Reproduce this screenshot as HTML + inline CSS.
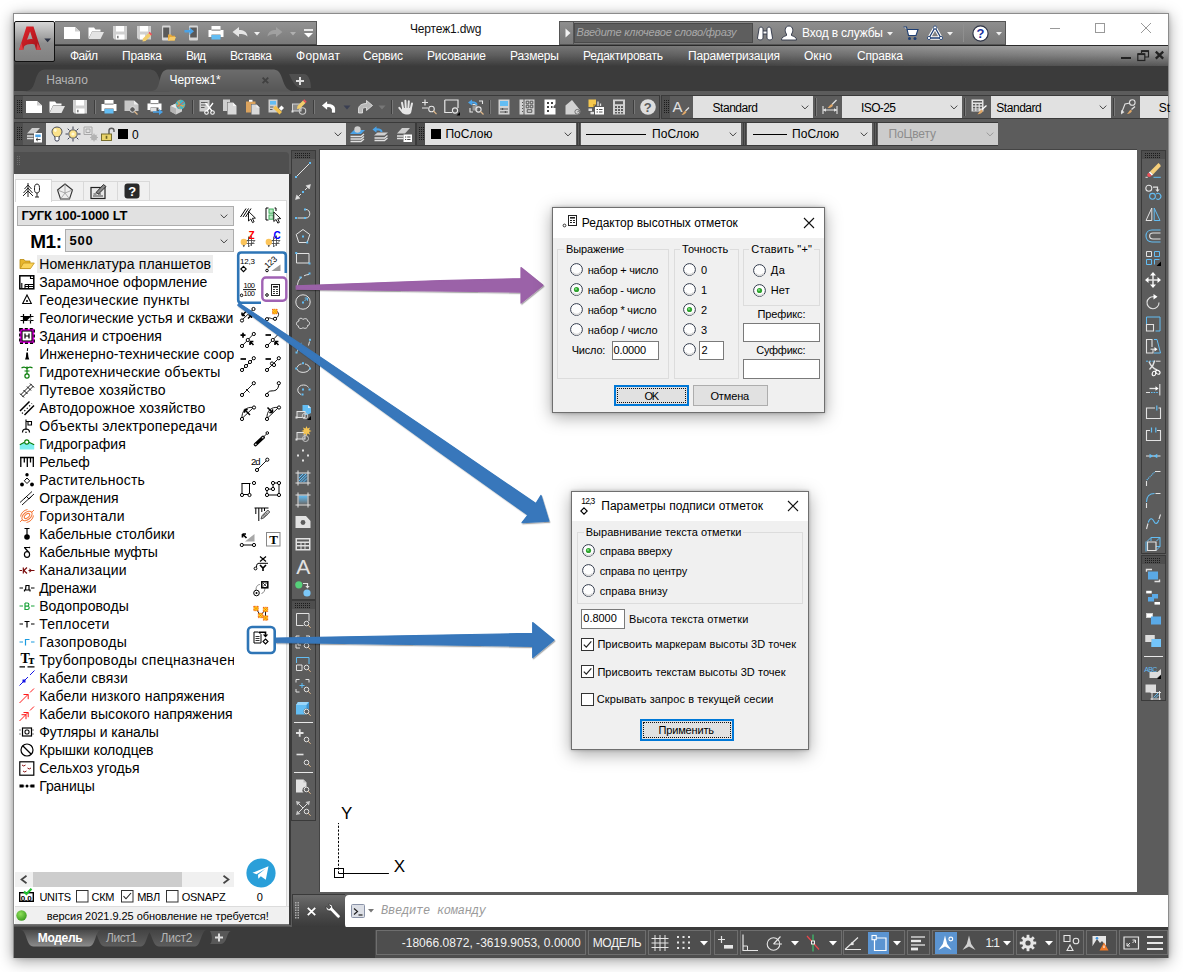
<!DOCTYPE html>
<html lang="ru"><head><meta charset="utf-8"><title>Чертеж1.dwg</title>
<style>
html,body{margin:0;padding:0;}
body{width:1183px;height:972px;overflow:hidden;background:#fff;position:relative;font-family:"Liberation Sans",sans-serif;}
div,svg{position:absolute;box-sizing:border-box;}
svg{overflow:visible;}
.t{white-space:nowrap;}
</style></head><body>
<div style="left:13px;top:13px;width:1156px;height:945px;background:#fff;border:1px solid #8c8c8c;box-shadow:0 3px 14px rgba(0,0,0,.38),0 0 4px rgba(0,0,0,.18);"></div>
<div style="left:14px;top:45px;width:1154px;height:50px;background:#3b3b3b;"></div>
<div style="left:14px;top:91px;width:1154px;height:836px;background:#5c5c5c;"></div>
<div style="left:55px;top:21px;width:262px;height:24px;background:linear-gradient(#929292,#7a7a7a);border-top:1px solid #5a5a5a;border-right:1px solid #555;border-bottom:1px solid #444;"></div>
<div class="t" style="left:410.00px;top:21px;font-size:12px;line-height:16px;color:#111;letter-spacing:-0.153px;">Чертеж1.dwg</div>
<div style="left:559px;top:21px;width:447px;height:24px;background:linear-gradient(#8e8e8e,#787878);border:1px solid #555;"></div>
<div style="left:574px;top:23px;width:179px;height:20px;background:#5e5e5e;border:1px solid #4a4a4a;"></div>
<div class="t" style="left:576.50px;top:25px;font-size:11px;line-height:14px;color:#a9a9a9;letter-spacing:-0.188px;font-style:italic;">Введите ключевое слово/фразу</div>
<div class="t" style="left:802.00px;top:25px;font-size:12px;line-height:16px;color:#fff;letter-spacing:-0.166px;">Вход в службы</div>
<div style="left:14px;top:45px;width:1154px;height:21px;background:linear-gradient(90deg,rgba(0,0,0,.33) 0%,rgba(0,0,0,.30) 55%,rgba(0,0,0,.12) 80%,rgba(0,0,0,0) 100%),linear-gradient(#aaaaaa,#888 45%,#565656);border-top:1px solid #2a2a2a;"></div>
<div class="t" style="left:70.00px;top:48px;font-size:12px;line-height:16px;color:#fff;letter-spacing:-0.501px;">Файл</div>
<div class="t" style="left:122.00px;top:48px;font-size:12px;line-height:16px;color:#fff;letter-spacing:-0.107px;">Правка</div>
<div class="t" style="left:186.00px;top:48px;font-size:12px;line-height:16px;color:#fff;letter-spacing:-0.855px;">Вид</div>
<div class="t" style="left:230.00px;top:48px;font-size:12px;line-height:16px;color:#fff;letter-spacing:-0.434px;">Вставка</div>
<div class="t" style="left:296.00px;top:48px;font-size:12px;line-height:16px;color:#fff;letter-spacing:0.275px;">Формат</div>
<div class="t" style="left:363.00px;top:48px;font-size:12px;line-height:16px;color:#fff;letter-spacing:-0.218px;">Сервис</div>
<div class="t" style="left:427.00px;top:48px;font-size:12px;line-height:16px;color:#fff;letter-spacing:-0.179px;">Рисование</div>
<div class="t" style="left:510.00px;top:48px;font-size:12px;line-height:16px;color:#fff;letter-spacing:-0.145px;">Размеры</div>
<div class="t" style="left:583.00px;top:48px;font-size:12px;line-height:16px;color:#fff;letter-spacing:-0.241px;">Редактировать</div>
<div class="t" style="left:688.00px;top:48px;font-size:12px;line-height:16px;color:#fff;letter-spacing:-0.176px;">Параметризация</div>
<div class="t" style="left:804.00px;top:48px;font-size:12px;line-height:16px;color:#fff;letter-spacing:0.039px;">Окно</div>
<div class="t" style="left:857.00px;top:48px;font-size:12px;line-height:16px;color:#fff;letter-spacing:-0.179px;">Справка</div>
<div style="left:14px;top:21px;width:41px;height:41px;background:linear-gradient(#d6d6d6,#8e8e8e 55%,#808080);border:1px solid #111;border-radius:2px;"></div>
<svg style="left:14px;top:66px;" width="320" height="29" viewBox="0 0 320 29">
<defs><linearGradient id="tabA" x1="0" y1="0" x2="0" y2="1"><stop offset="0" stop-color="#6c6c6c"/><stop offset="1" stop-color="#565656"/></linearGradient></defs>
<path d="M8 25.5 C18 25.5 19 22 22 12 C25 4.5 27 3.5 33 3.5 L134 3.5 C141 3.5 143 6 145 12 C148 22 150 25.5 158 25.5 Z" fill="#4c4c4c"/>
<path d="M134 25.5 C143 25.5 144 22 146 13 C148 5 150 3.5 156 3.5 L258 3.5 C264 3.5 266 6 268 12 C271 21 273 25.5 282 25.5 Z" fill="url(#tabA)"/>
<path d="M275 8 L290 8 C294 8 297 14 297 22 L288 22 C281 22 278 14 275 8 Z" fill="#4f4f4f"/>
<path d="M282 15 h8 M286 11 v8" stroke="#dcdcdc" stroke-width="2" fill="none"/>
<path d="M248.6 11.6 l5.6 5.6 M254.2 11.6 l-5.6 5.6" stroke="#414141" stroke-width="1.9" fill="none"/>
</svg>
<div class="t" style="left:46.30px;top:72px;font-size:12px;line-height:16px;color:#b4b4b4;letter-spacing:-0.062px;">Начало</div>
<div class="t" style="left:169.60px;top:72px;font-size:12px;line-height:16px;color:#fff;letter-spacing:-0.194px;">Чертеж1*</div>
<div style="left:14px;top:95px;width:646px;height:24px;background:#5c5c5c;border:1px solid #3a3a3a;"></div>
<div style="left:15px;top:96px;width:8px;height:22px;background:#4e4e4e;"></div>
<svg style="left:17px;top:100px;" width="6" height="14" viewBox="0 0 6 14"><rect x="0" y="0" width="1" height="1" fill="#1c1c1c"/><rect x="0" y="2" width="1" height="1" fill="#1c1c1c"/><rect x="0" y="4" width="1" height="1" fill="#1c1c1c"/><rect x="0" y="6" width="1" height="1" fill="#1c1c1c"/><rect x="0" y="8" width="1" height="1" fill="#1c1c1c"/><rect x="0" y="10" width="1" height="1" fill="#1c1c1c"/><rect x="0" y="12" width="1" height="1" fill="#1c1c1c"/><rect x="2" y="0" width="1" height="1" fill="#1c1c1c"/><rect x="2" y="2" width="1" height="1" fill="#1c1c1c"/><rect x="2" y="4" width="1" height="1" fill="#1c1c1c"/><rect x="2" y="6" width="1" height="1" fill="#1c1c1c"/><rect x="2" y="8" width="1" height="1" fill="#1c1c1c"/><rect x="2" y="10" width="1" height="1" fill="#1c1c1c"/><rect x="2" y="12" width="1" height="1" fill="#1c1c1c"/><rect x="4" y="0" width="1" height="1" fill="#1c1c1c"/><rect x="4" y="2" width="1" height="1" fill="#1c1c1c"/><rect x="4" y="4" width="1" height="1" fill="#1c1c1c"/><rect x="4" y="6" width="1" height="1" fill="#1c1c1c"/><rect x="4" y="8" width="1" height="1" fill="#1c1c1c"/><rect x="4" y="10" width="1" height="1" fill="#1c1c1c"/><rect x="4" y="12" width="1" height="1" fill="#1c1c1c"/></svg>
<div style="left:661px;top:95px;width:507px;height:24px;background:#5c5c5c;border:1px solid #3a3a3a;border-right:none;"></div>
<div style="left:662px;top:96px;width:8px;height:22px;background:#4e4e4e;"></div>
<svg style="left:664px;top:100px;" width="6" height="14" viewBox="0 0 6 14"><rect x="0" y="0" width="1" height="1" fill="#1c1c1c"/><rect x="0" y="2" width="1" height="1" fill="#1c1c1c"/><rect x="0" y="4" width="1" height="1" fill="#1c1c1c"/><rect x="0" y="6" width="1" height="1" fill="#1c1c1c"/><rect x="0" y="8" width="1" height="1" fill="#1c1c1c"/><rect x="0" y="10" width="1" height="1" fill="#1c1c1c"/><rect x="0" y="12" width="1" height="1" fill="#1c1c1c"/><rect x="2" y="0" width="1" height="1" fill="#1c1c1c"/><rect x="2" y="2" width="1" height="1" fill="#1c1c1c"/><rect x="2" y="4" width="1" height="1" fill="#1c1c1c"/><rect x="2" y="6" width="1" height="1" fill="#1c1c1c"/><rect x="2" y="8" width="1" height="1" fill="#1c1c1c"/><rect x="2" y="10" width="1" height="1" fill="#1c1c1c"/><rect x="2" y="12" width="1" height="1" fill="#1c1c1c"/><rect x="4" y="0" width="1" height="1" fill="#1c1c1c"/><rect x="4" y="2" width="1" height="1" fill="#1c1c1c"/><rect x="4" y="4" width="1" height="1" fill="#1c1c1c"/><rect x="4" y="6" width="1" height="1" fill="#1c1c1c"/><rect x="4" y="8" width="1" height="1" fill="#1c1c1c"/><rect x="4" y="10" width="1" height="1" fill="#1c1c1c"/><rect x="4" y="12" width="1" height="1" fill="#1c1c1c"/></svg>
<div style="left:14px;top:122px;width:402px;height:24px;background:#5c5c5c;border:1px solid #3a3a3a;"></div>
<div style="left:15px;top:123px;width:8px;height:22px;background:#4e4e4e;"></div>
<svg style="left:17px;top:127px;" width="6" height="14" viewBox="0 0 6 14"><rect x="0" y="0" width="1" height="1" fill="#1c1c1c"/><rect x="0" y="2" width="1" height="1" fill="#1c1c1c"/><rect x="0" y="4" width="1" height="1" fill="#1c1c1c"/><rect x="0" y="6" width="1" height="1" fill="#1c1c1c"/><rect x="0" y="8" width="1" height="1" fill="#1c1c1c"/><rect x="0" y="10" width="1" height="1" fill="#1c1c1c"/><rect x="0" y="12" width="1" height="1" fill="#1c1c1c"/><rect x="2" y="0" width="1" height="1" fill="#1c1c1c"/><rect x="2" y="2" width="1" height="1" fill="#1c1c1c"/><rect x="2" y="4" width="1" height="1" fill="#1c1c1c"/><rect x="2" y="6" width="1" height="1" fill="#1c1c1c"/><rect x="2" y="8" width="1" height="1" fill="#1c1c1c"/><rect x="2" y="10" width="1" height="1" fill="#1c1c1c"/><rect x="2" y="12" width="1" height="1" fill="#1c1c1c"/><rect x="4" y="0" width="1" height="1" fill="#1c1c1c"/><rect x="4" y="2" width="1" height="1" fill="#1c1c1c"/><rect x="4" y="4" width="1" height="1" fill="#1c1c1c"/><rect x="4" y="6" width="1" height="1" fill="#1c1c1c"/><rect x="4" y="8" width="1" height="1" fill="#1c1c1c"/><rect x="4" y="10" width="1" height="1" fill="#1c1c1c"/><rect x="4" y="12" width="1" height="1" fill="#1c1c1c"/></svg>
<div style="left:416px;top:122px;width:582px;height:24px;background:#5c5c5c;border:1px solid #3a3a3a;"></div>
<div style="left:417px;top:123px;width:8px;height:22px;background:#4e4e4e;"></div>
<svg style="left:419px;top:127px;" width="6" height="14" viewBox="0 0 6 14"><rect x="0" y="0" width="1" height="1" fill="#1c1c1c"/><rect x="0" y="2" width="1" height="1" fill="#1c1c1c"/><rect x="0" y="4" width="1" height="1" fill="#1c1c1c"/><rect x="0" y="6" width="1" height="1" fill="#1c1c1c"/><rect x="0" y="8" width="1" height="1" fill="#1c1c1c"/><rect x="0" y="10" width="1" height="1" fill="#1c1c1c"/><rect x="0" y="12" width="1" height="1" fill="#1c1c1c"/><rect x="2" y="0" width="1" height="1" fill="#1c1c1c"/><rect x="2" y="2" width="1" height="1" fill="#1c1c1c"/><rect x="2" y="4" width="1" height="1" fill="#1c1c1c"/><rect x="2" y="6" width="1" height="1" fill="#1c1c1c"/><rect x="2" y="8" width="1" height="1" fill="#1c1c1c"/><rect x="2" y="10" width="1" height="1" fill="#1c1c1c"/><rect x="2" y="12" width="1" height="1" fill="#1c1c1c"/><rect x="4" y="0" width="1" height="1" fill="#1c1c1c"/><rect x="4" y="2" width="1" height="1" fill="#1c1c1c"/><rect x="4" y="4" width="1" height="1" fill="#1c1c1c"/><rect x="4" y="6" width="1" height="1" fill="#1c1c1c"/><rect x="4" y="8" width="1" height="1" fill="#1c1c1c"/><rect x="4" y="10" width="1" height="1" fill="#1c1c1c"/><rect x="4" y="12" width="1" height="1" fill="#1c1c1c"/></svg>
<div style="left:94px;top:100px;width:1px;height:14px;background:#3e3e3e;"></div>
<div style="left:95px;top:100px;width:1px;height:14px;background:#787878;"></div>
<div style="left:192px;top:100px;width:1px;height:14px;background:#3e3e3e;"></div>
<div style="left:193px;top:100px;width:1px;height:14px;background:#787878;"></div>
<div style="left:313px;top:100px;width:1px;height:14px;background:#3e3e3e;"></div>
<div style="left:314px;top:100px;width:1px;height:14px;background:#787878;"></div>
<div style="left:391px;top:100px;width:1px;height:14px;background:#3e3e3e;"></div>
<div style="left:392px;top:100px;width:1px;height:14px;background:#787878;"></div>
<div style="left:489px;top:100px;width:1px;height:14px;background:#3e3e3e;"></div>
<div style="left:490px;top:100px;width:1px;height:14px;background:#787878;"></div>
<div style="left:633px;top:100px;width:1px;height:14px;background:#3e3e3e;"></div>
<div style="left:634px;top:100px;width:1px;height:14px;background:#787878;"></div>
<div style="left:693px;top:96px;width:120px;height:22px;background:#e1e1e1;"></div>
<svg style="left:801px;top:105.0px;" width="8" height="5" viewBox="0 0 8 5"><path d="M0.7 0.6 L4 3.9 L7.3 0.6" stroke="#444" stroke-width="1" fill="none"/></svg>
<div style="left:815px;top:98px;width:1px;height:18px;background:#3e3e3e;"></div>
<div style="left:816px;top:98px;width:1px;height:18px;background:#787878;"></div>
<div style="left:842px;top:96px;width:120px;height:22px;background:#e1e1e1;"></div>
<svg style="left:950px;top:105.0px;" width="8" height="5" viewBox="0 0 8 5"><path d="M0.7 0.6 L4 3.9 L7.3 0.6" stroke="#444" stroke-width="1" fill="none"/></svg>
<div style="left:964px;top:98px;width:1px;height:18px;background:#3e3e3e;"></div>
<div style="left:965px;top:98px;width:1px;height:18px;background:#787878;"></div>
<div style="left:991px;top:96px;width:120px;height:22px;background:#e1e1e1;"></div>
<svg style="left:1099px;top:105.0px;" width="8" height="5" viewBox="0 0 8 5"><path d="M0.7 0.6 L4 3.9 L7.3 0.6" stroke="#444" stroke-width="1" fill="none"/></svg>
<div style="left:1113px;top:98px;width:1px;height:18px;background:#3e3e3e;"></div>
<div style="left:1114px;top:98px;width:1px;height:18px;background:#787878;"></div>
<div style="left:1140px;top:96px;width:28px;height:22px;background:#e1e1e1;"></div>
<div class="t" style="left:712.50px;top:100px;font-size:12px;line-height:16px;color:#000;letter-spacing:-0.458px;">Standard</div>
<div class="t" style="left:861.00px;top:100px;font-size:12px;line-height:16px;color:#000;letter-spacing:-0.603px;">ISO-25</div>
<div class="t" style="left:996.30px;top:100px;font-size:12px;line-height:16px;color:#000;letter-spacing:-0.458px;">Standard</div>
<div class="t" style="left:1158.80px;top:100px;font-size:12px;line-height:16px;color:#000;">St</div>
<div style="left:46px;top:123px;width:300px;height:22px;background:#e1e1e1;"></div>
<svg style="left:334px;top:132.0px;" width="8" height="5" viewBox="0 0 8 5"><path d="M0.7 0.6 L4 3.9 L7.3 0.6" stroke="#444" stroke-width="1" fill="none"/></svg>
<div style="left:425px;top:123px;width:150.5px;height:22px;background:#e1e1e1;"></div>
<svg style="left:563.5px;top:132.0px;" width="8" height="5" viewBox="0 0 8 5"><path d="M0.7 0.6 L4 3.9 L7.3 0.6" stroke="#444" stroke-width="1" fill="none"/></svg>
<div style="left:581px;top:123px;width:160px;height:22px;background:#e1e1e1;"></div>
<svg style="left:729px;top:132.0px;" width="8" height="5" viewBox="0 0 8 5"><path d="M0.7 0.6 L4 3.9 L7.3 0.6" stroke="#444" stroke-width="1" fill="none"/></svg>
<div style="left:747px;top:123px;width:125px;height:22px;background:#e1e1e1;"></div>
<svg style="left:860px;top:132.0px;" width="8" height="5" viewBox="0 0 8 5"><path d="M0.7 0.6 L4 3.9 L7.3 0.6" stroke="#444" stroke-width="1" fill="none"/></svg>
<div style="left:878px;top:123px;width:119.5px;height:22px;background:#cccccc;"></div>
<svg style="left:985.5px;top:132.0px;" width="8" height="5" viewBox="0 0 8 5"><path d="M0.7 0.6 L4 3.9 L7.3 0.6" stroke="#9a9a9a" stroke-width="1" fill="none"/></svg>
<div style="left:577px;top:123px;width:1px;height:22px;background:#3e3e3e;"></div>
<div style="left:579px;top:123px;width:1px;height:22px;background:#3e3e3e;"></div>
<div style="left:743px;top:123px;width:1px;height:22px;background:#3e3e3e;"></div>
<div style="left:745px;top:123px;width:1px;height:22px;background:#3e3e3e;"></div>
<div style="left:874px;top:123px;width:1px;height:22px;background:#3e3e3e;"></div>
<div style="left:876px;top:123px;width:1px;height:22px;background:#3e3e3e;"></div>
<div style="left:118px;top:129px;width:10px;height:10px;background:#000;"></div>
<div class="t" style="left:132.00px;top:127px;font-size:12px;line-height:16px;color:#000;">0</div>
<div style="left:431px;top:129px;width:10px;height:10px;background:#000;"></div>
<div class="t" style="left:445.40px;top:126px;font-size:12px;line-height:16px;color:#000;letter-spacing:0.045px;">ПоСлою</div>
<div style="left:586px;top:134px;width:60px;height:1px;background:#000;"></div>
<div class="t" style="left:652.00px;top:126px;font-size:12px;line-height:16px;color:#000;letter-spacing:0.045px;">ПоСлою</div>
<div style="left:753px;top:134px;width:34px;height:1px;background:#000;"></div>
<div class="t" style="left:792.00px;top:126px;font-size:12px;line-height:16px;color:#000;letter-spacing:0.045px;">ПоСлою</div>
<div class="t" style="left:888.50px;top:126px;font-size:12px;line-height:16px;color:#8c8c8c;letter-spacing:-0.137px;">ПоЦвету</div>
<div style="left:14px;top:152px;width:275px;height:22px;background:#4f4f4f;border-radius:0 4px 0 0;"></div>
<div style="left:14px;top:174px;width:275px;height:751px;background:#f0f0f0;"></div>
<div style="left:291px;top:150px;width:25px;height:450px;background:#5c5c5c;border:1px solid #3a3a3a;"></div>
<div style="left:292px;top:151px;width:23px;height:8px;background:#4e4e4e;"></div>
<svg style="left:295px;top:153px;" width="16" height="6" viewBox="0 0 16 6"><rect x="0" y="0" width="1" height="1" fill="#1c1c1c"/><rect x="0" y="2" width="1" height="1" fill="#1c1c1c"/><rect x="0" y="4" width="1" height="1" fill="#1c1c1c"/><rect x="2" y="0" width="1" height="1" fill="#1c1c1c"/><rect x="2" y="2" width="1" height="1" fill="#1c1c1c"/><rect x="2" y="4" width="1" height="1" fill="#1c1c1c"/><rect x="4" y="0" width="1" height="1" fill="#1c1c1c"/><rect x="4" y="2" width="1" height="1" fill="#1c1c1c"/><rect x="4" y="4" width="1" height="1" fill="#1c1c1c"/><rect x="6" y="0" width="1" height="1" fill="#1c1c1c"/><rect x="6" y="2" width="1" height="1" fill="#1c1c1c"/><rect x="6" y="4" width="1" height="1" fill="#1c1c1c"/><rect x="8" y="0" width="1" height="1" fill="#1c1c1c"/><rect x="8" y="2" width="1" height="1" fill="#1c1c1c"/><rect x="8" y="4" width="1" height="1" fill="#1c1c1c"/><rect x="10" y="0" width="1" height="1" fill="#1c1c1c"/><rect x="10" y="2" width="1" height="1" fill="#1c1c1c"/><rect x="10" y="4" width="1" height="1" fill="#1c1c1c"/><rect x="12" y="0" width="1" height="1" fill="#1c1c1c"/><rect x="12" y="2" width="1" height="1" fill="#1c1c1c"/><rect x="12" y="4" width="1" height="1" fill="#1c1c1c"/><rect x="14" y="0" width="1" height="1" fill="#1c1c1c"/><rect x="14" y="2" width="1" height="1" fill="#1c1c1c"/><rect x="14" y="4" width="1" height="1" fill="#1c1c1c"/></svg>
<div style="left:291px;top:600px;width:25px;height:221px;background:#5c5c5c;border:1px solid #3a3a3a;"></div>
<div style="left:292px;top:601px;width:23px;height:8px;background:#4e4e4e;"></div>
<svg style="left:295px;top:603px;" width="16" height="6" viewBox="0 0 16 6"><rect x="0" y="0" width="1" height="1" fill="#1c1c1c"/><rect x="0" y="2" width="1" height="1" fill="#1c1c1c"/><rect x="0" y="4" width="1" height="1" fill="#1c1c1c"/><rect x="2" y="0" width="1" height="1" fill="#1c1c1c"/><rect x="2" y="2" width="1" height="1" fill="#1c1c1c"/><rect x="2" y="4" width="1" height="1" fill="#1c1c1c"/><rect x="4" y="0" width="1" height="1" fill="#1c1c1c"/><rect x="4" y="2" width="1" height="1" fill="#1c1c1c"/><rect x="4" y="4" width="1" height="1" fill="#1c1c1c"/><rect x="6" y="0" width="1" height="1" fill="#1c1c1c"/><rect x="6" y="2" width="1" height="1" fill="#1c1c1c"/><rect x="6" y="4" width="1" height="1" fill="#1c1c1c"/><rect x="8" y="0" width="1" height="1" fill="#1c1c1c"/><rect x="8" y="2" width="1" height="1" fill="#1c1c1c"/><rect x="8" y="4" width="1" height="1" fill="#1c1c1c"/><rect x="10" y="0" width="1" height="1" fill="#1c1c1c"/><rect x="10" y="2" width="1" height="1" fill="#1c1c1c"/><rect x="10" y="4" width="1" height="1" fill="#1c1c1c"/><rect x="12" y="0" width="1" height="1" fill="#1c1c1c"/><rect x="12" y="2" width="1" height="1" fill="#1c1c1c"/><rect x="12" y="4" width="1" height="1" fill="#1c1c1c"/><rect x="14" y="0" width="1" height="1" fill="#1c1c1c"/><rect x="14" y="2" width="1" height="1" fill="#1c1c1c"/><rect x="14" y="4" width="1" height="1" fill="#1c1c1c"/></svg>
<div style="left:1141px;top:150px;width:25px;height:404px;background:#5c5c5c;border:1px solid #3a3a3a;"></div>
<div style="left:1142px;top:151px;width:23px;height:8px;background:#4e4e4e;"></div>
<svg style="left:1145px;top:153px;" width="16" height="6" viewBox="0 0 16 6"><rect x="0" y="0" width="1" height="1" fill="#1c1c1c"/><rect x="0" y="2" width="1" height="1" fill="#1c1c1c"/><rect x="0" y="4" width="1" height="1" fill="#1c1c1c"/><rect x="2" y="0" width="1" height="1" fill="#1c1c1c"/><rect x="2" y="2" width="1" height="1" fill="#1c1c1c"/><rect x="2" y="4" width="1" height="1" fill="#1c1c1c"/><rect x="4" y="0" width="1" height="1" fill="#1c1c1c"/><rect x="4" y="2" width="1" height="1" fill="#1c1c1c"/><rect x="4" y="4" width="1" height="1" fill="#1c1c1c"/><rect x="6" y="0" width="1" height="1" fill="#1c1c1c"/><rect x="6" y="2" width="1" height="1" fill="#1c1c1c"/><rect x="6" y="4" width="1" height="1" fill="#1c1c1c"/><rect x="8" y="0" width="1" height="1" fill="#1c1c1c"/><rect x="8" y="2" width="1" height="1" fill="#1c1c1c"/><rect x="8" y="4" width="1" height="1" fill="#1c1c1c"/><rect x="10" y="0" width="1" height="1" fill="#1c1c1c"/><rect x="10" y="2" width="1" height="1" fill="#1c1c1c"/><rect x="10" y="4" width="1" height="1" fill="#1c1c1c"/><rect x="12" y="0" width="1" height="1" fill="#1c1c1c"/><rect x="12" y="2" width="1" height="1" fill="#1c1c1c"/><rect x="12" y="4" width="1" height="1" fill="#1c1c1c"/><rect x="14" y="0" width="1" height="1" fill="#1c1c1c"/><rect x="14" y="2" width="1" height="1" fill="#1c1c1c"/><rect x="14" y="4" width="1" height="1" fill="#1c1c1c"/></svg>
<div style="left:1141px;top:555px;width:25px;height:146px;background:#5c5c5c;border:1px solid #3a3a3a;"></div>
<div style="left:1142px;top:556px;width:23px;height:8px;background:#4e4e4e;"></div>
<svg style="left:1145px;top:558px;" width="16" height="6" viewBox="0 0 16 6"><rect x="0" y="0" width="1" height="1" fill="#1c1c1c"/><rect x="0" y="2" width="1" height="1" fill="#1c1c1c"/><rect x="0" y="4" width="1" height="1" fill="#1c1c1c"/><rect x="2" y="0" width="1" height="1" fill="#1c1c1c"/><rect x="2" y="2" width="1" height="1" fill="#1c1c1c"/><rect x="2" y="4" width="1" height="1" fill="#1c1c1c"/><rect x="4" y="0" width="1" height="1" fill="#1c1c1c"/><rect x="4" y="2" width="1" height="1" fill="#1c1c1c"/><rect x="4" y="4" width="1" height="1" fill="#1c1c1c"/><rect x="6" y="0" width="1" height="1" fill="#1c1c1c"/><rect x="6" y="2" width="1" height="1" fill="#1c1c1c"/><rect x="6" y="4" width="1" height="1" fill="#1c1c1c"/><rect x="8" y="0" width="1" height="1" fill="#1c1c1c"/><rect x="8" y="2" width="1" height="1" fill="#1c1c1c"/><rect x="8" y="4" width="1" height="1" fill="#1c1c1c"/><rect x="10" y="0" width="1" height="1" fill="#1c1c1c"/><rect x="10" y="2" width="1" height="1" fill="#1c1c1c"/><rect x="10" y="4" width="1" height="1" fill="#1c1c1c"/><rect x="12" y="0" width="1" height="1" fill="#1c1c1c"/><rect x="12" y="2" width="1" height="1" fill="#1c1c1c"/><rect x="12" y="4" width="1" height="1" fill="#1c1c1c"/><rect x="14" y="0" width="1" height="1" fill="#1c1c1c"/><rect x="14" y="2" width="1" height="1" fill="#1c1c1c"/><rect x="14" y="4" width="1" height="1" fill="#1c1c1c"/></svg>
<div style="left:319px;top:149px;width:818px;height:743px;background:#fff;border-top:1px solid #444;border-left:1px solid #444;"></div>
<svg style="left:295.3px;top:161.6px;" width="16" height="16" viewBox="0 0 16 16"><path d="M1.5 14.5 L14 2" stroke="#e2e2e2" stroke-width="1" fill="none" /><rect x="0.0" y="14.0" width="2" height="2" fill="#63bdf3"/><rect x="14.0" y="0.0" width="2" height="2" fill="#63bdf3"/></svg>
<svg style="left:295.3px;top:183.63px;" width="16" height="16" viewBox="0 0 16 16"><path d="M3.5 12.5 L6 10 M10 6 L12.5 3.5" stroke="#e2e2e2" stroke-width="1" fill="none" /><path d="M15.5 0.5 L14.3 5 L11 1.7 Z M0.5 15.5 L1.7 11 L5 14.3 Z" stroke="#e2e2e2" stroke-width="0.5" fill="#e2e2e2" /><rect x="7.0" y="7.0" width="2" height="2" fill="#63bdf3"/></svg>
<svg style="left:295.3px;top:205.66px;" width="16" height="16" viewBox="0 0 16 16"><path d="M2.5 12 H9 M11 3.5 C16 3.5 16 12 11 12" stroke="#e2e2e2" stroke-width="1" fill="none" /><rect x="0.0" y="11.0" width="2" height="2" fill="#63bdf3"/><rect x="9.0" y="11.0" width="2" height="2" fill="#63bdf3"/><rect x="9.0" y="2.5" width="2" height="2" fill="#63bdf3"/></svg>
<svg style="left:295.3px;top:227.69px;" width="16" height="16" viewBox="0 0 16 16"><path d="M8 1.5 L14.8 6.5 L12.2 14.5 L3.8 14.5 L1.2 6.5 Z" stroke="#e2e2e2" stroke-width="1" fill="none" /><rect x="7.0" y="7.5" width="2" height="2" fill="#63bdf3"/><rect x="11.2" y="13.5" width="2" height="2" fill="#63bdf3"/></svg>
<svg style="left:295.3px;top:249.72000000000003px;" width="16" height="16" viewBox="0 0 16 16"><path d="M1.5 3.5 H14 V13 H1.5 Z" stroke="#e2e2e2" stroke-width="1" fill="none" /><rect x="0.19999999999999996" y="2.0" width="2" height="2" fill="#63bdf3"/><rect x="13.5" y="12.5" width="2" height="2" fill="#63bdf3"/></svg>
<svg style="left:295.3px;top:271.75px;" width="16" height="16" viewBox="0 0 16 16"><path d="M2.5 14 C2.5 9 5 6 7 5" stroke="#e2e2e2" stroke-width="1" fill="none" /><path d="M9 3.8 C10.5 3 12.5 2.5 14 2.5" stroke="#e2e2e2" stroke-width="1" fill="none" /><rect x="4.5" y="4.5" width="2" height="2" fill="#63bdf3"/><rect x="13.5" y="0.5" width="2" height="2" fill="#63bdf3"/></svg>
<svg style="left:295.3px;top:293.78px;" width="16" height="16" viewBox="0 0 16 16"><circle cx="8" cy="8" r="7.2" fill="none" stroke="#e2e2e2" stroke-width="1"/><rect x="7.0" y="7.5" width="2" height="2" fill="#63bdf3"/><path d="M9.5 7 L12 4.5 M12.5 4 v2.8 M12.5 4 h-2.8" stroke="#63bdf3" stroke-width="1" fill="none" /></svg>
<svg style="left:295.3px;top:315.81px;" width="16" height="16" viewBox="0 0 16 16"><path d="M4 5 C3 2 7 1.5 8 3.5 C9.5 2 13 2.5 12.5 5 C15.5 5.5 15 9.5 12.5 9.5 C13 12.5 9 13 8 11.5 C6.5 13.5 3 12.5 3.5 10 C0.5 9.5 1 5.5 4 5 Z" stroke="#e2e2e2" stroke-width="1" fill="none" /></svg>
<svg style="left:295.3px;top:337.84000000000003px;" width="16" height="16" viewBox="0 0 16 16"><path d="M2.5 13.5 C2.5 10.5 3.5 8.5 5.5 6.5 M13.5 7.5 L14.5 3.5" stroke="#e2e2e2" stroke-width="1" fill="none" /><rect x="0.5" y="13.5" width="2" height="2" fill="#63bdf3"/><rect x="14.0" y="0.8" width="2" height="2" fill="#63bdf3"/><path d="M5 6.5 L6.5 5.2" stroke="#63bdf3" stroke-width="1" fill="none" /></svg>
<svg style="left:295.3px;top:359.87px;" width="16" height="16" viewBox="0 0 16 16"><path d="M2 9 C3 13.5 13 13.5 14.5 9 M2 7.5 C3 4.5 6 4 6.5 4 M10 4 C12 4.2 14 5.5 14.5 7.5" stroke="#e2e2e2" stroke-width="1" fill="none" /><rect x="7.0" y="2.2" width="2" height="2" fill="#63bdf3"/><rect x="0.19999999999999996" y="7.5" width="2" height="2" fill="#63bdf3"/><rect x="14.0" y="7.5" width="2" height="2" fill="#63bdf3"/></svg>
<svg style="left:295.3px;top:381.9px;" width="16" height="16" viewBox="0 0 16 16"><path d="M6 12.5 C0.5 10 2.5 3 8.5 3 C11 3 12.5 4 13.5 5.5" stroke="#e2e2e2" stroke-width="1" fill="none" /><rect x="7.0" y="6.5" width="2" height="2" fill="#63bdf3"/><rect x="13.5" y="6.5" width="2" height="2" fill="#63bdf3"/><rect x="6.5" y="11.5" width="2" height="2" fill="#63bdf3"/></svg>
<svg style="left:295.3px;top:403.93px;" width="16" height="16" viewBox="0 0 16 16"><path d="M7.5 1 H13 L16 4 V9 L12 11 H7.5 Z" fill="#63bdf3"/><path d="M13 1 V4 H16 Z" fill="#d4ecfb"/><rect x="2" y="7.5" width="8" height="6" fill="#7a7a7a" stroke="#e2e2e2" stroke-width="1"/><circle cx="10" cy="12" r="2.8" fill="none" stroke="#c8c8c8" stroke-width="1"/><rect x="0.5" y="12.5" width="2" height="2" fill="#e2e2e2"/><path d="M16 16 H12 L16 12 Z" fill="#000"/></svg>
<svg style="left:295.3px;top:425.96000000000004px;" width="16" height="16" viewBox="0 0 16 16"><rect x="2" y="6.5" width="8" height="6.5" fill="#7a7a7a" stroke="#e2e2e2" stroke-width="1"/><circle cx="10.5" cy="12.5" r="3" fill="none" stroke="#c8c8c8" stroke-width="1"/><rect x="0.5" y="12.5" width="2" height="2" fill="#e2e2e2"/><path d="M11.5 0 l1 2.6 l2.6 -1.1 l-1.1 2.6 l2.6 1 l-2.6 1 l1.1 2.6 l-2.6 -1.1 l-1 2.6 l-1 -2.6 l-2.6 1.1 l1.1 -2.6 l-2.6 -1 l2.6 -1 l-1.1 -2.6 l2.6 1.1 Z" fill="#f5c452"/></svg>
<svg style="left:295.3px;top:447.99px;" width="16" height="16" viewBox="0 0 16 16"><rect x="7.0" y="1.5" width="2" height="2" fill="#e2e2e2"/><rect x="2.0" y="6.5" width="2" height="2" fill="#e2e2e2"/><rect x="12.0" y="6.5" width="2" height="2" fill="#e2e2e2"/><rect x="7.0" y="11.5" width="2" height="2" fill="#e2e2e2"/></svg>
<svg style="left:295.3px;top:470.02px;" width="16" height="16" viewBox="0 0 16 16"><rect x="3.5" y="3.5" width="9" height="9" fill="#4a6a82"/><path d="M4 8 L8 4 M4 11 L11 4 M5.5 12 L12 5.5 M8.5 12 L12 8.5" stroke="#63bdf3" stroke-width="1" fill="none" /><path d="M0.5 3 H15.5 M0.5 13 H15.5 M3 0.5 V15.5 M13 0.5 V15.5" stroke="#e2e2e2" stroke-width="1" fill="none" /></svg>
<svg style="left:295.3px;top:492.05000000000007px;" width="16" height="16" viewBox="0 0 16 16"><defs><linearGradient id="gradic" x1="0" y1="0" x2="0" y2="1"><stop offset="0" stop-color="#63bdf3"/><stop offset="1" stop-color="#6a6a6a"/></linearGradient></defs><rect x="3.5" y="3.5" width="9" height="9" fill="url(#gradic)"/><path d="M0.5 3 H15.5 M0.5 13 H15.5 M3 0.5 V15.5 M13 0.5 V15.5" stroke="#e2e2e2" stroke-width="1" fill="none" /></svg>
<svg style="left:295.3px;top:514.08px;" width="16" height="16" viewBox="0 0 16 16"><path d="M0.5 2 H11 L15.5 7 V14 H0.5 Z" fill="#e2e2e2"/><circle cx="8" cy="8.5" r="2.4" fill="#5c5c5c"/></svg>
<svg style="left:295.3px;top:536.11px;" width="16" height="16" viewBox="0 0 16 16"><rect x="0.5" y="2" width="15" height="12.5" fill="#e2e2e2"/><path d="M2 3.5 H14 V5.5 H2 Z M2 7 H5.5 V9 H2 Z M6.5 7 H9.5 V9 H6.5 Z M10.5 7 H14 V9 H10.5 Z M2 10.5 H5.5 V13 H2 Z M6.5 10.5 H9.5 V13 H6.5 Z M10.5 10.5 H14 V13 H10.5 Z" fill="#5c5c5c"/></svg>
<svg style="left:295.3px;top:580.1700000000001px;" width="16" height="16" viewBox="0 0 16 16"><circle cx="3.8" cy="4.8" r="3.6" fill="#56d07a"/><circle cx="12" cy="13" r="3.6" fill="#7cc8f8"/><path d="M8 3.5 H12.5 V6.5" stroke="#e2e2e2" stroke-width="1.2" fill="none" /><path d="M10.3 6 H14.7 L12.5 8.5 Z" fill="#e2e2e2"/></svg>
<div class="t" style="left:296.30px;top:554px;font-size:21px;line-height:25px;color:#e2e2e2;">A</div>
<svg style="left:295.3px;top:612.0px;" width="16" height="16" viewBox="0 0 16 16"><path d="M1.5 1.5 H14 V9 M8.5 13.5 H1.5 V1.5" stroke="#e2e2e2" stroke-width="1" fill="none" /><circle cx="11.5" cy="11.5" r="2.3" fill="none" stroke="#e2e2e2" stroke-width="1"/><path d="M13.2 13.2 l2.4 2.6" stroke="#e0b88a" stroke-width="1"/></svg>
<svg style="left:295.3px;top:633.5px;" width="16" height="16" viewBox="0 0 16 16"><path d="M1 5 V2 H4.5 M11 2 H14.5 V5 M1 10 V14 H5 M3 5 H12 V8.5 M6 11 H3 V5" stroke="#e2e2e2" stroke-width="1" fill="none" /><circle cx="11.5" cy="11.5" r="2.3" fill="none" stroke="#e2e2e2" stroke-width="1"/><path d="M13.2 13.2 l2.4 2.6" stroke="#e0b88a" stroke-width="1"/></svg>
<svg style="left:295.3px;top:656.0px;" width="16" height="16" viewBox="0 0 16 16"><path d="M1.5 7 V1.5 H14 V8" stroke="#63bdf3" stroke-width="1" fill="none" /><path d="M1.5 9 H7 V14.5 H1.5 Z" stroke="#e2e2e2" stroke-width="1" fill="none" /><circle cx="11.5" cy="11.5" r="2.3" fill="none" stroke="#e2e2e2" stroke-width="1"/><path d="M13.2 13.2 l2.4 2.6" stroke="#e0b88a" stroke-width="1"/></svg>
<svg style="left:295.3px;top:678.3px;" width="16" height="16" viewBox="0 0 16 16"><path d="M1 4.5 V1.5 H4.5 M10.5 1.5 H14 V4.5 M1 11 V14 H4.5" stroke="#e2e2e2" stroke-width="1" fill="none" /><path d="M4.5 7.5 H9.5 M7 5 V10" stroke="#63bdf3" stroke-width="1" fill="none" /><circle cx="11.5" cy="11.5" r="2.3" fill="none" stroke="#e2e2e2" stroke-width="1"/><path d="M13.2 13.2 l2.4 2.6" stroke="#e0b88a" stroke-width="1"/></svg>
<svg style="left:295.3px;top:700.0px;" width="16" height="16" viewBox="0 0 16 16"><path d="M1 5 L3 2 H14 V11 L11 14.5 H1 Z" fill="#63bdf3"/><path d="M1 5 L3 2 H14 L11.5 5 Z" fill="#9bd6fa"/><path d="M11.5 5 L14 2 V11 L11.5 14.5 Z" fill="#3d93cf"/><circle cx="11.5" cy="11.5" r="2.9" fill="#5c5c5c"/><circle cx="11.5" cy="11.5" r="2.3" fill="none" stroke="#e2e2e2" stroke-width="1"/><path d="M13.2 13.2 l2.4 2.6" stroke="#e0b88a" stroke-width="1"/></svg>
<svg style="left:295.3px;top:728.4px;" width="16" height="16" viewBox="0 0 16 16"><path d="M1 5 H8.5 M4.7 1.2 V8.8" stroke="#e2e2e2" stroke-width="1.8" fill="none" /><circle cx="11.5" cy="11.5" r="2.3" fill="none" stroke="#e2e2e2" stroke-width="1"/><path d="M13.2 13.2 l2.4 2.6" stroke="#e0b88a" stroke-width="1"/></svg>
<svg style="left:295.3px;top:750.6px;" width="16" height="16" viewBox="0 0 16 16"><path d="M1.5 3.5 H8.5" stroke="#e2e2e2" stroke-width="1.6" fill="none" /><circle cx="11.5" cy="11.5" r="2.3" fill="none" stroke="#e2e2e2" stroke-width="1"/><path d="M13.2 13.2 l2.4 2.6" stroke="#e0b88a" stroke-width="1"/></svg>
<svg style="left:295.3px;top:777.8px;" width="16" height="16" viewBox="0 0 16 16"><path d="M1 1.5 H8.5 L11.5 4.5 V9 A3.2 3.2 0 0 0 8.5 14.5 H1 Z" fill="#e2e2e2"/><path d="M8.5 1.5 V4.5 H11.5 Z" fill="#bdbdbd"/><circle cx="11.5" cy="11.5" r="2.3" fill="none" stroke="#e2e2e2" stroke-width="1"/><path d="M13.2 13.2 l2.4 2.6" stroke="#e0b88a" stroke-width="1"/></svg>
<svg style="left:295.3px;top:800.0px;" width="16" height="16" viewBox="0 0 16 16"><path d="M3 3 L8 8 M13 3 L3.5 12.5" stroke="#e2e2e2" stroke-width="1" fill="none" /><path d="M1 1 L5.5 2 L2 5.5 Z M15 1 L14 5.5 L10.5 2 Z M1 15 L2 10.5 L5.5 14 Z" fill="#c8c8c8"/><circle cx="11.5" cy="11.5" r="2.9" fill="#5c5c5c"/><circle cx="11.5" cy="11.5" r="2.3" fill="none" stroke="#e2e2e2" stroke-width="1"/><path d="M13.2 13.2 l2.4 2.6" stroke="#e0b88a" stroke-width="1"/></svg>
<div style="left:294px;top:722px;width:19px;height:1.3px;background:#e8e8e8;"></div>
<div style="left:294px;top:771.5px;width:19px;height:1.3px;background:#e8e8e8;"></div>
<svg style="left:1145.0px;top:162.4px;" width="16" height="16" viewBox="0 0 16 16"><path d="M5 9.5 L13.5 1 L15.5 3 L15.5 4.5 L8 12.5 Z" fill="#f6cf7a"/><path d="M5 9.5 L8 12.5 L6.8 13.8 L3.8 10.8 Z" fill="#fff"/><path d="M3.8 10.8 L6.8 13.8 C5.5 15.2 3.6 15.2 2.7 14.2 C1.7 13.2 2.2 11.8 3.8 10.8 Z" fill="#f0525a"/><path d="M0.5 15.3 H2.8" stroke="#e2e2e2" stroke-width="1" fill="none" /><path d="M8.5 15.3 H15.8" stroke="#63bdf3" stroke-width="1" fill="none" /></svg>
<svg style="left:1145.0px;top:184.4px;" width="16" height="16" viewBox="0 0 16 16"><circle cx="3.8" cy="4.3" r="3" fill="none" stroke="#e2e2e2" stroke-width="1.1"/><path d="M8 3.2 H12.5 V6" stroke="#e2e2e2" stroke-width="1.2" fill="none" /><path d="M10.4 5.5 H14.6 L12.5 8 Z" fill="#e2e2e2"/><circle cx="7.5" cy="12.3" r="2.9" fill="none" stroke="#63bdf3" stroke-width="1.1"/><path d="M11.2 10 A2.9 2.9 0 1 1 11.2 14.6" fill="none" stroke="#63bdf3" stroke-width="1.1"/></svg>
<svg style="left:1145.0px;top:206.4px;" width="16" height="16" viewBox="0 0 16 16"><path d="M6.8 2 V14.5 H1 Z" stroke="#e2e2e2" stroke-width="1" fill="none" /><path d="M9.2 2 V14.5 H15 Z" stroke="#63bdf3" stroke-width="1" fill="none" /></svg>
<svg style="left:1145.0px;top:228.4px;" width="16" height="16" viewBox="0 0 16 16"><path d="M15.5 2 H7 C-1 2 -1 14 7 14 H15.5" stroke="#63bdf3" stroke-width="1.1" fill="none" /><path d="M15.5 5 H8 C3.5 5 3.5 11 8 11 H15.5" stroke="#e2e2e2" stroke-width="1.1" fill="none" /></svg>
<svg style="left:1145.0px;top:250.39999999999998px;" width="16" height="16" viewBox="0 0 16 16"><path d="M1.5 1.5 H6.5 V6.5 H1.5 Z" stroke="#e2e2e2" stroke-width="1" fill="none" /><path d="M9.5 1.5 H14.5 V6.5 H9.5 Z M1.5 9.5 H6.5 V14.5 H1.5 Z M9.5 14.5 V9.5 H14.5" stroke="#63bdf3" stroke-width="1" fill="none" /><path d="M16 16 H11.5 L16 11.5 Z" fill="#000"/></svg>
<svg style="left:1145.0px;top:272.4px;" width="16" height="16" viewBox="0 0 16 16"><path d="M2.5 8 H13.5 M8 2.5 V13.5" stroke="#e2e2e2" stroke-width="1.6" fill="none" /><path d="M8 0 L11 3.5 H5 Z M8 16 L11 12.5 H5 Z M0 8 L3.5 5 V11 Z M16 8 L12.5 5 V11 Z" fill="#fff"/></svg>
<svg style="left:1145.0px;top:294.4px;" width="16" height="16" viewBox="0 0 16 16"><path d="M9 2.8 A6 6 0 1 0 14 8.5" stroke="#e2e2e2" stroke-width="1.1" fill="none" /><path d="M8.5 0 L12.5 2.8 L8.5 5.6 Z" fill="#fff"/></svg>
<svg style="left:1145.0px;top:316.4px;" width="16" height="16" viewBox="0 0 16 16"><path d="M1.5 8.5 V1 H15 V15 H10.5" stroke="#63bdf3" stroke-width="1" fill="none" /><path d="M1.5 8.5 H8.5 V15 H1.5 Z" stroke="#e2e2e2" stroke-width="1.1" fill="none" /></svg>
<svg style="left:1145.0px;top:338.4px;" width="16" height="16" viewBox="0 0 16 16"><path d="M9 1.5 H12 L15.5 15 H9" stroke="#63bdf3" stroke-width="1" fill="none" stroke-dasharray="none"/><path d="M8 11.5 V15 H1.5 V1.5 H7 V9" stroke="#e2e2e2" stroke-width="1.1" fill="none" /><path d="M5.5 11.2 H10" stroke="#e2e2e2" stroke-width="1.1" fill="none" /><path d="M9.5 9 L12.5 11.2 L9.5 13.4 Z" fill="#fff"/></svg>
<svg style="left:1145.0px;top:360.4px;" width="16" height="16" viewBox="0 0 16 16"><path d="M1 1.2 H9" stroke="#63bdf3" stroke-width="1" fill="none" stroke-dasharray="2 1.2"/><path d="M11 1.2 H15.5" stroke="#e2e2e2" stroke-width="1" fill="none" /><path d="M9.8 0.5 C9 4 7 7 4.5 9.5 M4 1.5 C5.5 5.5 8.5 8.5 12 10" stroke="#e2e2e2" stroke-width="1.4" fill="none" /><ellipse cx="12.8" cy="12.2" rx="2.4" ry="1.7" transform="rotate(35 12.8 12.2)" fill="none" stroke="#fff" stroke-width="1.1"/><ellipse cx="9" cy="13.5" rx="1.7" ry="2.3" transform="rotate(20 9 13.5)" fill="none" stroke="#fff" stroke-width="1.1"/></svg>
<svg style="left:1145.0px;top:382.4px;" width="16" height="16" viewBox="0 0 16 16"><path d="M14.8 2 V13.5" stroke="#e2e2e2" stroke-width="1.1" fill="none" /><path d="M4.5 6.5 H11" stroke="#e2e2e2" stroke-width="1.3" fill="none" /><path d="M10.5 4.2 L13.6 6.5 L10.5 8.8 Z" fill="#fff"/><path d="M1 10.5 H5" stroke="#e2e2e2" stroke-width="1" fill="none" /><path d="M6 10.5 H13.5" stroke="#63bdf3" stroke-width="1" fill="none" stroke-dasharray="1.6 1"/></svg>
<svg style="left:1145.0px;top:404.4px;" width="16" height="16" viewBox="0 0 16 16"><path d="M10 4 H1.5 V14.5 H15.5 V4 H13.5" stroke="#e2e2e2" stroke-width="1.1" fill="none" /><path d="M11.8 1.5 V6.5" stroke="#63bdf3" stroke-width="1.2" fill="none" /></svg>
<svg style="left:1145.0px;top:426.4px;" width="16" height="16" viewBox="0 0 16 16"><path d="M5 4.5 H1.5 V14.5 H15.5 V4.5 H12" stroke="#e2e2e2" stroke-width="1.1" fill="none" /><path d="M6.5 1.5 V6.5 M10.8 1.5 V6.5" stroke="#63bdf3" stroke-width="1.2" fill="none" /></svg>
<svg style="left:1145.0px;top:448.4px;" width="16" height="16" viewBox="0 0 16 16"><path d="M1 8 H15.5" stroke="#e2e2e2" stroke-width="1" fill="none" /><path d="M4.5 5.8 L8.3 8 L4.5 10.2 Z M12.3 5.8 L8.5 8 L12.3 10.2 Z" fill="#63bdf3"/></svg>
<svg style="left:1145.0px;top:470.4px;" width="16" height="16" viewBox="0 0 16 16"><path d="M10 1.5 H15.5 M1.5 11 V16" stroke="#e2e2e2" stroke-width="1.1" fill="none" /><path d="M1.8 10 L9.5 2.2" stroke="#63bdf3" stroke-width="1.1" fill="none" stroke-dasharray="1.2 0.8"/></svg>
<svg style="left:1145.0px;top:492.4px;" width="16" height="16" viewBox="0 0 16 16"><path d="M10.5 1.5 H15.5 M1.5 11 V16" stroke="#e2e2e2" stroke-width="1.1" fill="none" /><path d="M1.5 10 C1.5 4.5 4.5 1.5 9.5 1.5" stroke="#63bdf3" stroke-width="1.1" fill="none" /></svg>
<svg style="left:1145.0px;top:514.4px;" width="16" height="16" viewBox="0 0 16 16"><path d="M1.5 15 L3 9.5 M14 5 L15.5 0.5" stroke="#e2e2e2" stroke-width="1.1" fill="none" /><path d="M3.2 8.5 C5.5 2 8 5.5 9 7.5 C10.5 10.5 12.5 10 13.8 6" stroke="#63bdf3" stroke-width="1.1" fill="none" /></svg>
<svg style="left:1145.0px;top:536.4px;" width="16" height="16" viewBox="0 0 16 16"><path d="M2 5.5 L6 1.5 H15 V10.5 L11 14.5 M6 1.5 L6 5 M15 1.5 L11.5 5 M15 10.5 L11 10.5" stroke="#63bdf3" stroke-width="1" fill="none" /><path d="M2.5 6 H11 V14.5 H2.5 Z" stroke="#e2e2e2" stroke-width="1.2" fill="none" /><path d="M1 5.5 V15.5" stroke="#63bdf3" stroke-width="1" fill="none" /></svg>
<svg style="left:1145.0px;top:567.7px;" width="16" height="16" viewBox="0 0 16 16"><rect x="3" y="3.5" width="10" height="8" fill="#5aa9e6"/><path d="M1.5 3.8 V1.5 H7 M9.5 13.5 H14.5 V11.5" stroke="#e2e2e2" stroke-width="1.4" fill="none" /></svg>
<svg style="left:1145.0px;top:590.0px;" width="16" height="16" viewBox="0 0 16 16"><path d="M3 7 H7 V4 H13 V8.5 H9 V11.5 H3 Z" fill="#5aa9e6"/><rect x="1.2" y="0.8" width="5.5" height="2.6" fill="#fff"/><rect x="9.5" y="12" width="5.5" height="2.6" fill="#fff"/></svg>
<svg style="left:1145.0px;top:612.2px;" width="16" height="16" viewBox="0 0 16 16"><rect x="1.5" y="1.5" width="6" height="4" fill="#fff" stroke="#d0d0d0" stroke-width="1"/><rect x="6" y="4.5" width="10" height="8" fill="#5aa9e6"/></svg>
<svg style="left:1145.0px;top:633.9px;" width="16" height="16" viewBox="0 0 16 16"><rect x="0.5" y="1" width="9" height="7" fill="#dcdcdc"/><rect x="6.5" y="5" width="9.5" height="8" fill="#74c5fa"/><path d="M6.5 5 H9.5 V8 H6.5 Z" fill="#5c5c5c"/><rect x="6.5" y="5" width="9.5" height="8" fill="#74c5fa"/><path d="M0.5 1 H9.5 V5 H6.5 V8 H0.5 Z" fill="#dcdcdc"/></svg>
<svg style="left:1145.0px;top:663.5px;" width="16" height="16" viewBox="0 0 16 16"><path d="M4.5 8 H12.5 L16 5 V10.5 L12 14 H4.5 Z" fill="#dcdcdc"/><path d="M16 15 H12 L16 11 Z" fill="#000"/></svg>
<svg style="left:1145.0px;top:683.9px;" width="16" height="16" viewBox="0 0 16 16"><rect x="0.5" y="0.5" width="10.5" height="8" fill="#dcdcdc"/><path d="M5.5 8.5 H16 M5.5 15 H16 M7 7 V16 M14.5 7 V16" stroke="#e2e2e2" stroke-width="1" fill="none" /><path d="M8.5 13.5 L13 9 M10.5 14 L13.5 11" stroke="#63bdf3" stroke-width="1" fill="none" /></svg>
<div class="t" style="left:1144.30px;top:665px;font-size:7px;line-height:9px;color:#63bdf3;letter-spacing:-0.696px;">ABC</div>
<div style="left:1144px;top:655.6px;width:19px;height:1.3px;background:#e8e8e8;"></div>
<svg style="left:26.0px;top:99.0px;" width="16" height="16" viewBox="0 0 16 16"><path d="M0 2 H11 L16 6.5 V14 H0 Z" fill="#fff"/><path d="M11 2 V6.5 H16 Z" fill="#cfcfcf"/></svg>
<svg style="left:49.0px;top:99.0px;" width="16" height="16" viewBox="0 0 16 16"><path d="M0.5 13.5 V2.5 H6 L7.5 4.5 H12.5 V6.5 H4 Z" fill="#fff"/><path d="M0.5 14 L4 7 H16 L12.5 14 Z" fill="#e4e4e4"/></svg>
<svg style="left:72.0px;top:99.0px;" width="16" height="16" viewBox="0 0 16 16"><path d="M1 1 H15 V14.5 H2.5 L1 13 Z" fill="#d0d0d0"/><rect x="4" y="1" width="8" height="5.5" fill="#fff"/><rect x="4" y="9.5" width="8.5" height="5" fill="#fff"/><rect x="5.2" y="10.8" width="1.3" height="2.5" fill="#666"/></svg>
<svg style="left:101.0px;top:99.0px;" width="16" height="16" viewBox="0 0 16 16"><rect x="3.5" y="1" width="9" height="5" fill="#fff"/><path d="M0.5 5 H15.5 V12 H12.5 V9.5 H3.5 V12 H0.5 Z" fill="#fff"/><rect x="3.5" y="10" width="9" height="4.5" fill="#63bdf3"/><rect x="3.5" y="4.6" width="9" height="1" fill="#777"/></svg>
<svg style="left:124.0px;top:99.0px;" width="16" height="16" viewBox="0 0 16 16"><path d="M0.5 1.5 H10 L14.5 5.5 V12 H0.5 Z" fill="#c6c6c6"/><path d="M10 1.5 V5.5 H14.5 Z" fill="#eee"/><circle cx="8.5" cy="10.5" r="2.8" fill="#5c5c5c" stroke="#e2e2e2" stroke-width="1"/><path d="M10.5 12.5 l3 3" stroke="#e0b88a" stroke-width="1.2"/></svg>
<svg style="left:146.5px;top:99.0px;" width="16" height="16" viewBox="0 0 16 16"><rect x="3.5" y="1" width="8" height="4" fill="#fff"/><path d="M0.5 4.5 H14.5 V11 H11.5 V8.5 H3.5 V11 H0.5 Z" fill="#fff"/><rect x="3.5" y="9" width="6" height="3.5" fill="#e2e2e2"/><rect x="3.5" y="4.2" width="8" height="0.9" fill="#777"/><path d="M6 12.2 H12 V10 L16 13 L12 16 V13.8 H6 Z" fill="#4aa3e8"/></svg>
<svg style="left:170.0px;top:99.0px;" width="16" height="16" viewBox="0 0 16 16"><path d="M0.5 7 L6 4.5 L12 7 V12.5 L6 15.5 L0.5 12.5 Z" fill="#cfcfcf"/><path d="M0.5 7 L6 9.5 L12 7 L6 4.5 Z" fill="#e8e8e8"/><path d="M6 9.5 V15.5 L0.5 12.5 V7 Z" fill="#b4b4b4"/><circle cx="10.5" cy="5.5" r="4.8" fill="#3fb6c9"/><path d="M6 5.5 A4.8 2 0 0 0 15 5.5 M10.5 0.8 A2.2 4.8 0 0 0 10.5 10.2 M7 2.5 L14 8.5" stroke="#f0a23c" stroke-width="0.9" fill="none"/><path d="M7 8 L14 2.8" stroke="#e8564a" stroke-width="0.9"/></svg>
<svg style="left:199.0px;top:99.0px;" width="16" height="16" viewBox="0 0 16 16"><path d="M0.5 1 H10.5 V9 L8 12.5 H0.5 Z" fill="#cfcfcf"/><path d="M2 3.5 H8.5 M2 6 H6.5 M2 8.5 H5.5" stroke="#5c5c5c" stroke-width="1.1"/><path d="M6.5 4 L13 12 M14 4 L8 12" stroke="#fff" stroke-width="1.3"/><circle cx="7.5" cy="13.5" r="1.8" fill="none" stroke="#fff" stroke-width="1.1"/><circle cx="13.5" cy="13.5" r="1.8" fill="none" stroke="#fff" stroke-width="1.1"/></svg>
<svg style="left:221.7px;top:99.0px;" width="16" height="16" viewBox="0 0 16 16"><path d="M1 0.5 H8 V3 H5 V12 H1 Z" fill="#cfcfcf"/><path d="M5.5 3.5 H11 L14.5 7 V15.5 H5.5 Z" fill="#d9d9d9"/><path d="M11 3.5 V7 H14.5 Z" fill="#f4f4f4"/></svg>
<svg style="left:244.5px;top:99.0px;" width="16" height="16" viewBox="0 0 16 16"><path d="M1 2.5 H10.5 V5 H6 V13.5 H1 Z" fill="#dba35e"/><path d="M4 0.8 H7.5 V2.8 H4 Z" fill="#fff"/><path d="M6.5 5.5 H11.5 L14.5 8.5 V15.5 H6.5 Z" fill="#d9d9d9"/><path d="M11.5 5.5 V8.5 H14.5 Z" fill="#f4f4f4"/></svg>
<svg style="left:268.0px;top:99.0px;" width="16" height="16" viewBox="0 0 16 16"><path d="M0.5 0.5 H9.5 V13.5 H0.5 Z" fill="#cfcfcf"/><rect x="2" y="2" width="6" height="3.6" fill="#63bdf3"/><path d="M2 8 H5.5 M2 10.5 H4.5" stroke="#5c5c5c" stroke-width="1"/><path d="M5 9 L11.5 15.5 L14 13 L7.5 6.5 Z" fill="#f2c14e"/><path d="M10.8 9.2 L13.5 6.5 L16 9 L13.3 11.7 Z" fill="#fff"/></svg>
<svg style="left:291.0px;top:99.0px;" width="16" height="16" viewBox="0 0 16 16"><rect x="1.5" y="5" width="8.5" height="7" fill="#8a8a8a" stroke="#d4d4d4" stroke-width="1"/><circle cx="11.5" cy="12" r="3.2" fill="none" stroke="#c8c8c8" stroke-width="1.1"/><rect x="0.5" y="11.5" width="2" height="2" fill="#e2e2e2"/><path d="M6.5 7 L12 1.5 L14.5 4 L9 9.5 L6 10 Z" fill="#f2cd6b"/><path d="M12 1.5 L13.2 0.3 L15.7 2.8 L14.5 4 Z" fill="#f0525a"/></svg>
<svg style="left:321.0px;top:99.0px;" width="16" height="16" viewBox="0 0 16 16"><path d="M0.5 6.5 L6.5 1.5 V4.5 C11 4.5 14.5 6.5 14.5 10 V14 H10.5 V11 C10.5 9 9 8.5 6.5 8.5 V11.5 Z" fill="#fff" stroke="#3a3a3a" stroke-width="0.6"/></svg>
<svg style="left:356.5px;top:99.0px;" width="16" height="16" viewBox="0 0 16 16"><path d="M15.5 6.5 L9.5 1.5 V4.5 C5 4.5 1.5 6.5 1.5 10 V14 H5.5 V11 C5.5 9 7 8.5 9.5 8.5 V11.5 Z" fill="#b9b9b9" stroke="#e8e8e8" stroke-width="0.8"/></svg>
<svg style="left:397.7px;top:99.0px;" width="16" height="16" viewBox="0 0 16 16"><path d="M4 9 H13.5 V11.5 C13.5 14 12 15.5 10 15.5 H8 C6 15.5 5 14.5 4 13 Z" fill="#e6e6e6"/><path d="M5.2 10 L4 3.8 M7.8 10 L7.4 1.8 M10.3 10 L10.8 2.2 M12.6 10.5 L14 4.5 M5 13.5 L1.3 8.8" stroke="#e6e6e6" stroke-width="2" stroke-linecap="round"/></svg>
<svg style="left:421.0px;top:99.0px;" width="16" height="16" viewBox="0 0 16 16"><path d="M1 3.5 H7 M4 0.5 V6.5 M1 9 H7" stroke="#e6e6e6" stroke-width="1.2"/><circle cx="10.5" cy="10" r="2.8" fill="none" stroke="#e6e6e6" stroke-width="1.1"/><path d="M12.5 12 l3 3.2" stroke="#e0b88a" stroke-width="1.2"/></svg>
<svg style="left:444.0px;top:99.0px;" width="16" height="16" viewBox="0 0 16 16"><path d="M0.8 1 H14 V9 M8 13.5 H0.8 V1" stroke="#e6e6e6" stroke-width="1.2" fill="none"/><circle cx="11" cy="11.5" r="2.6" fill="none" stroke="#e6e6e6" stroke-width="1.1"/><path d="M16 16.5 H12.5 L16 13 Z" fill="#000"/></svg>
<svg style="left:467.5px;top:99.0px;" width="16" height="16" viewBox="0 0 16 16"><path d="M2 9 V13 H5 M11 2 H14.5 V5 M4.5 5.5 H8 V9" stroke="#e6e6e6" stroke-width="1.1" fill="none"/><rect x="4.5" y="6.5" width="5" height="5" fill="#9a9a9a"/><path d="M0 3.5 L4 0.5 V2.3 C7.5 2.3 9.5 3.5 9.5 6 H7.5 C7.5 5 6.5 4.6 4 4.6 V6.5 Z" fill="#4aa3e8"/><circle cx="10.5" cy="10.5" r="2.6" fill="none" stroke="#e6e6e6" stroke-width="1.1"/><path d="M12.5 12.5 l3 3" stroke="#e0b88a" stroke-width="1.2"/></svg>
<svg style="left:496.0px;top:99.0px;" width="16" height="16" viewBox="0 0 16 16"><path d="M2.5 0.5 H13.5 V15.5 H2.5 Z" fill="#d2d2d2"/><rect x="4" y="2" width="8" height="5" fill="#63bdf3"/><path d="M4 10 H12 M4 13 H12" stroke="#555" stroke-width="1"/><path d="M6.5 9 V11 M9.5 12 V14" stroke="#555" stroke-width="1.4"/></svg>
<svg style="left:519.0px;top:99.0px;" width="16" height="16" viewBox="0 0 16 16"><path d="M0.5 0.5 H4.5 V15.5 H0.5 Z" fill="#d2d2d2"/><path d="M5.5 0.5 H15.5 V15.5 H5.5 Z" fill="#d2d2d2"/><path d="M3.5 3 v1 M3.5 6 v1 M3.5 9 v1 M3.5 12 v1" stroke="#555" stroke-width="1"/><path d="M7.2 2.2 h2.6 v2.6 h-2.6 Z M11.2 2.2 h2.6 v2.6 h-2.6 Z M7.2 6.2 h2.6 v2.6 h-2.6 Z M11.2 6.2 h2.6 v2.6 h-2.6 Z M8.2 10.7 h4.6 v2.6 h-4.6 Z" fill="none" stroke="#555" stroke-width="1"/></svg>
<svg style="left:542.0px;top:99.0px;" width="16" height="16" viewBox="0 0 16 16"><path d="M2.5 0.5 H13.5 L13.5 5 L11.5 7.5 V9 L13.5 9 V15.5 H2.5 Z" fill="#fff"/><path d="M5 3 h2 v2 h-2 Z M9 3 h2 v2 h-2 Z M5 7 h2 v2 h-2 Z M9 7 h1.5 v2 h-1.5 Z M5 11 h2 v2 h-2 Z" fill="#444"/></svg>
<svg style="left:564.7px;top:99.0px;" width="16" height="16" viewBox="0 0 16 16"><path d="M0.5 6.5 L7 1 L14.8 10.8 C16 13 14.8 15.5 12.3 15.5 H0.5 Z" fill="#d2d2d2"/><circle cx="12.3" cy="12.8" r="2.4" fill="#d2d2d2" stroke="#6a6a6a" stroke-width="0.9"/><path d="M12.3 12.8 C13.8 12.8 14.5 11.5 14.8 10.8" stroke="#6a6a6a" stroke-width="0.9" fill="none"/></svg>
<svg style="left:588.0px;top:99.0px;" width="16" height="16" viewBox="0 0 16 16"><path d="M0.5 0.5 H8 V5 L5 8 H0.5 Z" fill="#f5c84e"/><path d="M5 8 V5 H8 Z" fill="#c99a2a"/><rect x="0.5" y="9.5" width="3.5" height="2.5" fill="#e2e2e2"/><rect x="2.5" y="12.8" width="3.5" height="2.5" fill="#e2e2e2"/><path d="M10 2.5 V7 M12.5 4.5 V7" stroke="#e2e2e2" stroke-width="1.3"/><rect x="7" y="8" width="9" height="7.5" fill="#fff"/><path d="M8.5 10.5 h1.5 M11 10.5 h3.5 M8.5 13 h1.5 M11 13 h3.5" stroke="#555" stroke-width="1.1"/></svg>
<svg style="left:611.0px;top:99.0px;" width="16" height="16" viewBox="0 0 16 16"><path d="M2 0.5 H14 V15.5 H2 Z" fill="#d2d2d2"/><rect x="4" y="2.2" width="8" height="3" fill="#5c5c5c"/><path d="M4 7 h2 v2 h-2 Z M7 7 h2 v2 h-2 Z M10 7 h2 v2 h-2 Z M4 10 h2 v2 h-2 Z M7 10 h2 v2 h-2 Z M10 10 h2 v2 h-2 Z M4 13 h2 v1.5 h-2 Z M7 13 h2 v1.5 h-2 Z M10 13 h2 v1.5 h-2 Z" fill="#5c5c5c"/></svg>
<svg style="left:639.8px;top:99.0px;" width="16" height="16" viewBox="0 0 16 16"><circle cx="8" cy="8" r="7.8" fill="#dedede"/></svg>
<div class="t" style="left:643.83px;top:99px;font-size:13px;line-height:17px;color:#5c5c5c;font-weight:bold;">?</div>
<svg style="left:342.5px;top:105px;" width="8" height="5" viewBox="0 0 8 5"><path d="M0.5 0.5 H7.5 L4 4.5 Z" fill="#3a3f52"/></svg>
<svg style="left:378px;top:105px;" width="8" height="5" viewBox="0 0 8 5"><path d="M0.5 0.5 H7.5 L4 4.5 Z" fill="#777"/></svg>
<svg style="left:673.0px;top:99.0px;" width="16" height="16" viewBox="0 0 16 16"><path d="M12.5 12 L16 8.5" stroke="#e2e2e2" stroke-width="1.3"/><path d="M8.5 16 C10 16.2 12.7 15.2 13.5 13 L12.3 11.7 C10.7 12.3 9.8 14.8 8.5 16 Z" fill="#e0a868"/></svg>
<div class="t" style="left:672.50px;top:97px;font-size:15px;line-height:19px;color:#e2e2e2;">A</div>
<svg style="left:822.0px;top:99.0px;" width="16" height="16" viewBox="0 0 16 16"><path d="M1 7 V15 M15 7 V15 M1 11 H15" stroke="#e2e2e2" stroke-width="1.1"/><path d="M1 11 l3 -1.8 v3.6 Z M15 11 l-3 -1.8 v3.6 Z" fill="#e2e2e2"/><path d="M10 5.5 L14.5 1" stroke="#e2e2e2" stroke-width="1.3"/><path d="M5.5 9 C7 9.2 10 8.5 11 6.5 L9.8 5 C8 5.5 7 8 5.5 9 Z" fill="#e0a868"/></svg>
<svg style="left:970.5px;top:99.0px;" width="16" height="16" viewBox="0 0 16 16"><rect x="0.5" y="0.5" width="12" height="12" fill="#e2e2e2"/><path d="M2 2 H11 V3.5 H2 Z M2 5 h2.2 v1.6 h-2.2 Z M5.4 5 h2.2 v1.6 h-2.2 Z M8.8 5 h2.2 v1.6 h-2.2 Z M2 7.8 h2.2 v1.6 h-2.2 Z M5.4 7.8 h2.2 v1.6 h-2.2 Z M8.8 7.8 h2.2 v1.6 h-2.2 Z M2 10.4 h2.2 v1.2 h-2.2 Z M5.4 10.4 h2.2 v1.2 h-2.2 Z" fill="#5c5c5c"/><path d="M11 10.5 L15.5 6.5" stroke="#fff" stroke-width="1.4"/><path d="M6.5 15.2 C8 15.5 11 14.5 12 12 L10.7 10.6 C9 11.2 8 14 6.5 15.2 Z" fill="#e0a868"/></svg>
<svg style="left:1120.0px;top:99.0px;" width="16" height="16" viewBox="0 0 16 16"><path d="M1.5 14 L5 5 L10 4" stroke="#e2e2e2" stroke-width="1.1" fill="none"/><path d="M1 15.5 L1.3 11 L4.5 13 Z" fill="#e2e2e2"/><circle cx="12.3" cy="3.5" r="2.8" fill="none" stroke="#e2e2e2" stroke-width="1.1"/><path d="M11.5 10.5 L15 7.5" stroke="#e2e2e2" stroke-width="1.3"/><path d="M7 15 C8.5 15.2 11.2 14.2 12 12 L10.8 10.7 C9.2 11.3 8.3 13.8 7 15 Z" fill="#e0a868"/></svg>
<svg style="left:25.700000000000003px;top:126.0px;" width="16" height="16" viewBox="0 0 16 16"><path d="M1 7.5 L6 2 H14 L9 7.5 Z" fill="#cfcfcf"/><path d="M1 10 H7.5 M1 12.5 H7.5" stroke="#e2e2e2" stroke-width="1.4"/><rect x="8" y="7" width="8" height="9.5" fill="#fff"/><rect x="9.3" y="8.5" width="5.4" height="2.6" fill="#4aa3e8"/><path d="M10 13.5 H14.5 M10 13.5 l1.8 -1.5 M10 13.5 l1.8 1.5" stroke="#333" stroke-width="0.9" fill="none"/></svg>
<svg style="left:48.5px;top:126.0px;" width="16" height="16" viewBox="0 0 16 16"><path d="M8 1 C4.5 1 3 3.5 3 5.8 C3 8 4.8 9.2 5.8 11 H10.2 C11.2 9.2 13 8 13 5.8 C13 3.5 11.5 1 8 1 Z" fill="#fbe28a" stroke="#3a3f52" stroke-width="0.9"/><path d="M6 11 V13.8 C6 15.5 10 15.5 10 13.8 V11" fill="#fff" stroke="#3a3f52" stroke-width="1"/><ellipse cx="6.3" cy="4.3" rx="1.4" ry="1.8" fill="#fff8d8"/></svg>
<svg style="left:65.4px;top:126.0px;" width="16" height="16" viewBox="0 0 16 16"><path d="M8 0.5 V3 M8 13 V15.5 M0.5 8 H3 M13 8 H15.5 M2.7 2.7 L4.5 4.5 M11.5 11.5 L13.3 13.3 M2.7 13.3 L4.5 11.5 M11.5 4.5 L13.3 2.7" stroke="#3a3f52" stroke-width="1"/><circle cx="8" cy="8" r="4.2" fill="#fbe28a" stroke="#3a3f52" stroke-width="0.9"/><circle cx="8" cy="8" r="1.6" fill="#fff8d8"/></svg>
<svg style="left:82.8px;top:126.0px;" width="16" height="16" viewBox="0 0 16 16"><path d="M1 1 H9 V8.5 H1 Z M3 3 H7 V6.5 H3 Z" fill="none" stroke="#a8a8a8" stroke-width="1"/><circle cx="11" cy="11.5" r="3" fill="#b4b4b4"/><path d="M11 7.5 V15.5 M7 11.5 H15 M8.2 8.7 L13.8 14.3 M13.8 8.7 L8.2 14.3" stroke="#b4b4b4" stroke-width="1"/></svg>
<svg style="left:99.7px;top:126.0px;" width="16" height="16" viewBox="0 0 16 16"><path d="M9 8 V4.5 C9 1.5 14 1.5 14 4.5 V6" stroke="#5a5a5a" stroke-width="1.4" fill="none"/><rect x="1.5" y="8" width="10" height="6.5" fill="#e9d36a" stroke="#6b6222" stroke-width="0.9"/><rect x="5.7" y="9.8" width="1.6" height="3" fill="#6b6222"/></svg>
<svg style="left:349.4px;top:126.0px;" width="16" height="16" viewBox="0 0 16 16"><path d="M1 8 L5 4 H16 L12 8 Z" fill="#4aa3e8"/><path d="M1.5 10.5 H12 L15 8 M1.5 13 H12 L15 10.5 M1.5 15.5 H12 L15 13" stroke="#e2e2e2" stroke-width="1.3" fill="none"/><circle cx="8.5" cy="3.5" r="3.2" fill="#cfcfcf"/></svg>
<svg style="left:372.0px;top:126.0px;" width="16" height="16" viewBox="0 0 16 16"><path d="M2 9.5 L5.5 6.5 H16 L12.5 9.5 Z" fill="#cfcfcf"/><path d="M2.5 12 H12.5 L15.5 9.5 M2.5 14.5 H12.5 L15.5 12" stroke="#e2e2e2" stroke-width="1.3" fill="none"/><path d="M0.5 3.5 L4.5 0.3 V2.3 C8.5 2.3 10.5 3.5 10.5 6 H8.5 C8.5 5 7.5 4.6 4.5 4.6 V6.8 Z" fill="#4aa3e8"/></svg>
<svg style="left:395.7px;top:126.0px;" width="16" height="16" viewBox="0 0 16 16"><path d="M1 7.5 L6 2 H14 L9 7.5 Z" fill="#cfcfcf"/><path d="M1 10 H7.5 M1 12.5 H7.5" stroke="#e2e2e2" stroke-width="1.4"/><rect x="7.5" y="8.5" width="8.5" height="7.5" fill="#fff"/><path d="M9 11 h1.2 M11.2 11 h3.3 M9 13.5 h1.2 M11.2 13.5 h3.3" stroke="#444" stroke-width="1.1"/></svg>
<div style="left:14px;top:174px;width:1px;height:752px;background:#fff;"></div>
<div style="left:15px;top:200px;width:272px;height:706px;background:#fff;border-top:1px solid #d9d9d9;border-right:1px solid #d9d9d9;"></div>
<div style="left:51px;top:181px;width:99px;height:20px;background:#f0f0f0;border:1px solid #d9d9d9;"></div>
<div style="left:83px;top:182px;width:1px;height:18px;background:#d9d9d9;"></div>
<div style="left:117px;top:182px;width:1px;height:18px;background:#d9d9d9;"></div>
<div style="left:15px;top:179px;width:37px;height:23px;background:#fff;border:1px solid #d9d9d9;border-bottom:none;"></div>
<svg style="left:22px;top:182px;" width="20" height="18" viewBox="0 0 20 18"><path d="M6 1 L6 15 M6 3 L2.5 7 M6 3 L9.5 7 M6 6 L1.5 11 M6 6 L10.5 11 M6 9 L1 14 M6 9 L11 14" stroke="#222" stroke-width="1" fill="none"/>
<path d="M15 2 C12.5 2 12.5 5 12.5 7 C12.5 9.5 13 11 15 11 C17 11 17.5 9.5 17.5 7 C17.5 5 17.5 2 15 2 Z M15 11 L15 15 M13 15 L17 15" stroke="#222" stroke-width="1" fill="#fff"/></svg>
<svg style="left:56px;top:183px;" width="18" height="17" viewBox="0 0 18 17"><path d="M9 1 L16.5 7 L13.5 16 L4.5 16 L1.5 7 Z" fill="#eee" stroke="#333" stroke-width="1.1"/><path d="M9 1 L9 10 L1.5 7 M9 10 L16.5 7 M9 10 L4.5 16 M9 10 L13.5 16" stroke="#999" stroke-width="0.8" fill="none"/></svg>
<svg style="left:90px;top:183px;" width="18" height="17" viewBox="0 0 18 17"><rect x="1" y="4.5" width="14" height="11" fill="#e8e8e8" stroke="#222" stroke-width="1.2"/><path d="M3 13 h10 M3.5 11 h3 M8 11 h3" stroke="#444" stroke-width="1.2"/><path d="M6 9.5 L13.5 1.5 L16 3.5 L8.5 11 Z" fill="#888" stroke="#222" stroke-width="0.9"/></svg>
<svg style="left:124px;top:183px;" width="16" height="16" viewBox="0 0 16 16"><rect x="0.5" y="0.5" width="15" height="15" rx="3" fill="#2a2a2a"/></svg>
<div class="t" style="left:128.20px;top:183px;font-size:13px;line-height:17px;color:#fff;font-weight:bold;">?</div>
<div style="left:17px;top:205.5px;width:217px;height:20px;background:#e1e1e1;border:1px solid #adadad;"></div>
<svg style="left:220px;top:213.5px;" width="8" height="5" viewBox="0 0 8 5"><path d="M0.7 0.6 L4 3.9 L7.3 0.6" stroke="#444" stroke-width="1" fill="none"/></svg>
<div style="left:65px;top:229.3px;width:169px;height:23px;background:#e1e1e1;border:1px solid #adadad;"></div>
<svg style="left:220px;top:239.0px;" width="8" height="5" viewBox="0 0 8 5"><path d="M0.7 0.6 L4 3.9 L7.3 0.6" stroke="#444" stroke-width="1" fill="none"/></svg>
<div class="t" style="left:21.50px;top:207px;font-size:13px;line-height:17px;color:#000;letter-spacing:-0.123px;font-weight:bold;">ГУГК 100-1000 LT</div>
<div class="t" style="left:30.30px;top:230px;font-size:19px;line-height:23px;color:#000;letter-spacing:-0.510px;font-weight:bold;">М1:</div>
<div class="t" style="left:69.50px;top:232px;font-size:13px;line-height:17px;color:#000;letter-spacing:0.805px;font-weight:bold;">500</div>
<div style="left:37px;top:255px;width:175.5px;height:17.5px;background:#ececec;"></div>
<div style="left:15px;top:254px;width:219px;height:545px;overflow:hidden;">
<div class="t" style="left:24.20px;top:1px;font-size:14px;line-height:18px;color:#000;letter-spacing:0.127px;">Номенклатура планшетов</div>
<div class="t" style="left:24.20px;top:19px;font-size:14px;line-height:18px;color:#000;letter-spacing:0.045px;">Зарамочное оформление</div>
<div class="t" style="left:24.20px;top:37px;font-size:14px;line-height:18px;color:#000;letter-spacing:0.302px;">Геодезические пункты</div>
<div class="t" style="left:24.20px;top:55px;font-size:14px;line-height:18px;color:#000;letter-spacing:-0.020px;">Геологические устья и скважины</div>
<div class="t" style="left:24.20px;top:73px;font-size:14px;line-height:18px;color:#000;letter-spacing:-0.028px;">Здания и строения</div>
<div class="t" style="left:24.20px;top:91px;font-size:14px;line-height:18px;color:#000;letter-spacing:0.090px;">Инженерно-технические сооружения</div>
<div class="t" style="left:24.20px;top:109px;font-size:14px;line-height:18px;color:#000;letter-spacing:0.193px;">Гидротехнические объекты</div>
<div class="t" style="left:24.20px;top:127px;font-size:14px;line-height:18px;color:#000;letter-spacing:0.237px;">Путевое хозяйство</div>
<div class="t" style="left:24.20px;top:145px;font-size:14px;line-height:18px;color:#000;letter-spacing:0.153px;">Автодорожное хозяйство</div>
<div class="t" style="left:24.20px;top:163px;font-size:14px;line-height:18px;color:#000;letter-spacing:0.187px;">Объекты электропередачи</div>
<div class="t" style="left:24.20px;top:181px;font-size:14px;line-height:18px;color:#000;letter-spacing:0.065px;">Гидрография</div>
<div class="t" style="left:24.20px;top:199px;font-size:14px;line-height:18px;color:#000;letter-spacing:-0.042px;">Рельеф</div>
<div class="t" style="left:24.20px;top:217px;font-size:14px;line-height:18px;color:#000;letter-spacing:0.188px;">Растительность</div>
<div class="t" style="left:24.20px;top:235px;font-size:14px;line-height:18px;color:#000;letter-spacing:-0.069px;">Ограждения</div>
<div class="t" style="left:24.20px;top:253px;font-size:14px;line-height:18px;color:#000;letter-spacing:0.365px;">Горизонтали</div>
<div class="t" style="left:24.20px;top:271px;font-size:14px;line-height:18px;color:#000;letter-spacing:0.051px;">Кабельные столбики</div>
<div class="t" style="left:24.20px;top:289px;font-size:14px;line-height:18px;color:#000;letter-spacing:-0.126px;">Кабельные муфты</div>
<div class="t" style="left:24.20px;top:307px;font-size:14px;line-height:18px;color:#000;letter-spacing:0.219px;">Канализации</div>
<div class="t" style="left:24.20px;top:325px;font-size:14px;line-height:18px;color:#000;letter-spacing:-0.076px;">Дренажи</div>
<div class="t" style="left:24.20px;top:343px;font-size:14px;line-height:18px;color:#000;letter-spacing:0.059px;">Водопроводы</div>
<div class="t" style="left:24.20px;top:361px;font-size:14px;line-height:18px;color:#000;letter-spacing:0.300px;">Теплосети</div>
<div class="t" style="left:24.20px;top:379px;font-size:14px;line-height:18px;color:#000;letter-spacing:0.289px;">Газопроводы</div>
<div class="t" style="left:24.20px;top:397px;font-size:14px;line-height:18px;color:#000;letter-spacing:0.300px;">Трубопроводы спецназначения</div>
<div class="t" style="left:24.20px;top:415px;font-size:14px;line-height:18px;color:#000;letter-spacing:0.136px;">Кабели связи</div>
<div class="t" style="left:24.20px;top:433px;font-size:14px;line-height:18px;color:#000;letter-spacing:0.141px;">Кабели низкого напряжения</div>
<div class="t" style="left:24.20px;top:451px;font-size:14px;line-height:18px;color:#000;letter-spacing:0.037px;">Кабели высокого напряжения</div>
<div class="t" style="left:24.20px;top:469px;font-size:14px;line-height:18px;color:#000;letter-spacing:-0.081px;">Футляры и каналы</div>
<div class="t" style="left:24.20px;top:487px;font-size:14px;line-height:18px;color:#000;letter-spacing:-0.113px;">Крышки колодцев</div>
<div class="t" style="left:24.20px;top:505px;font-size:14px;line-height:18px;color:#000;letter-spacing:0.031px;">Сельхоз угодья</div>
<div class="t" style="left:24.20px;top:523px;font-size:14px;line-height:18px;color:#000;letter-spacing:-0.083px;">Границы</div>
</div>
<svg style="left:18.5px;top:255.5px;" width="16" height="16" viewBox="0 0 16 16"><path d="M1 3.5 L1 12.5 L11 12.5 L11 5 L6 5 L5 3.5 Z" fill="#e8b62c" stroke="#b98a12" stroke-width="0.8"/><path d="M1.2 12.6 L4.5 7 L15.3 7 L11.5 12.6 Z" fill="#fbd45a" stroke="#c2921a" stroke-width="0.8"/></svg>
<svg style="left:18.5px;top:273.5px;" width="16" height="16" viewBox="0 0 16 16"><rect x="0.8" y="1.8" width="14" height="13" fill="#fff" stroke="#000" stroke-width="1.5"/><path d="M2.8 9 v5 M6 10.5 h9 M6 12.5 h9 M6 10.5 v4 M9.5 10.5 v4 M11.5 2 v2.5 h3.5 M2.8 9 h0.1" stroke="#000" stroke-width="1.1" fill="none"/></svg>
<svg style="left:18.5px;top:291.5px;" width="16" height="16" viewBox="0 0 16 16"><path d="M8 3 L12.3 11.5 L3.7 11.5 Z" fill="#fff" stroke="#000" stroke-width="1.1"/><circle cx="8" cy="9" r="1" fill="#000"/></svg>
<svg style="left:18.5px;top:309.5px;" width="16" height="16" viewBox="0 0 16 16"><path d="M1.5 6.5 h13 M1.5 10.5 h13 M4.5 4 v9.5 M11.5 4 v9.5" stroke="#000" stroke-width="1.2" fill="none"/><path d="M4.5 6.5 h7 v4 h-7 Z" fill="#000"/><path d="M8 10.5 L11.5 7 L11.5 10.5Z" fill="#fff"/></svg>
<svg style="left:18.5px;top:327.5px;" width="16" height="16" viewBox="0 0 16 16"><rect x="0.8" y="0.8" width="14.4" height="14.4" fill="#ff00ff"/><rect x="0.8" y="0.8" width="14.4" height="14.4" fill="none" stroke="#000" stroke-width="1.4" stroke-dasharray="3 2"/><rect x="3" y="3" width="10" height="10" fill="#fff" stroke="#000" stroke-width="1.1"/><path d="M6 5.5 v5 M10 5.5 v5 M6 8 h4" stroke="#000" stroke-width="1.2"/></svg>
<svg style="left:18.5px;top:345.5px;" width="16" height="16" viewBox="0 0 16 16"><path d="M8.3 2 L9.2 2 L8.8 5 L7.8 5 Z M7.3 6.5 L8.9 6.5 L9.4 11 L10.3 13.5 L6 13.5 L6.9 11 Z" fill="#000"/></svg>
<svg style="left:18.5px;top:363.5px;" width="16" height="16" viewBox="0 0 16 16"><path d="M8 2.5 V10 M2.5 4 C4.5 2.5 6.5 3 8 4.5 C9.5 3 11.5 2.5 13.5 4 M5.5 7 h5" stroke="#0a7d0a" stroke-width="1.2" fill="none"/><circle cx="8" cy="12" r="2.1" fill="#fff" stroke="#0a7d0a" stroke-width="1.2"/></svg>
<svg style="left:18.5px;top:381.5px;" width="16" height="16" viewBox="0 0 16 16"><path d="M1.5 13 L12.5 2 M3.5 15 L14.5 4 M1 11.5 L5 15.5 M4.5 8 L8.5 12 M8 4.5 L12 8.5 M11 1.5 L15 5.5" stroke="#000" stroke-width="0.9" fill="none"/></svg>
<svg style="left:18.5px;top:399.5px;" width="16" height="16" viewBox="0 0 16 16"><path d="M1 11 L10.5 1.5 M5.5 15 L15 5.5" stroke="#000" stroke-width="1.5" fill="none"/><path d="M3 13.5 L13 3.5" stroke="#000" stroke-width="1.2" stroke-dasharray="1.2 2.2" fill="none"/></svg>
<svg style="left:18.5px;top:417.5px;" width="16" height="16" viewBox="0 0 16 16"><path d="M7 1.5 V12 M7 3.5 h6 M9 3.5 v3.5 h3.5 v-3.5" stroke="#000" stroke-width="1.1" fill="none"/><path d="M3.5 14.5 A3.5 3.5 0 0 1 10.5 14.5" stroke="#000" stroke-width="1.2" fill="none"/><circle cx="7" cy="14.3" r="0.8" fill="#000"/></svg>
<svg style="left:18.5px;top:435.5px;" width="16" height="16" viewBox="0 0 16 16"><path d="M0.8 8.5 L4 7 L11 7 L15.2 8.5 L15.2 13.5 L0.8 13.5 Z" fill="#7fefef"/><path d="M0.8 8.7 L5.5 6.3 M10 6.3 L15.2 8.7" stroke="#0a7d0a" stroke-width="1.1" fill="none"/><circle cx="7.8" cy="6" r="2.1" fill="#fff" stroke="#0a7d0a" stroke-width="1.1"/></svg>
<svg style="left:18.5px;top:453.5px;" width="16" height="16" viewBox="0 0 16 16"><path d="M1 3.5 h14 M1.8 3.5 v9.5 M5.3 3.5 v5 M8.3 3.5 v9.5 M11.5 3.5 v5 M14.3 3.5 v9.5" stroke="#000" stroke-width="1.3" fill="none"/></svg>
<svg style="left:18.5px;top:471.5px;" width="16" height="16" viewBox="0 0 16 16"><circle cx="8" cy="2.8" r="1.7" fill="#000"/><circle cx="3" cy="12.5" r="1.9" fill="#000"/><circle cx="13" cy="12.5" r="1.9" fill="#000"/><path d="M8 6 L10.7 8.8 L8 11.5 L5.3 8.8 Z" fill="#fff" stroke="#000" stroke-width="1"/></svg>
<svg style="left:18.5px;top:489.5px;" width="16" height="16" viewBox="0 0 16 16"><path d="M1 12.5 L13 1.5 M3 15 L15 4 M5 9 L7.5 6.5 L10 9 L12.5 6.5" stroke="#000" stroke-width="0.9" fill="none"/></svg>
<svg style="left:18.5px;top:507.5px;" width="16" height="16" viewBox="0 0 16 16"><ellipse cx="8" cy="8" rx="3.2" ry="1.8" transform="rotate(-40 8 8)" fill="none" stroke="#f47a3c" stroke-width="1"/><ellipse cx="8" cy="8" rx="6" ry="3.6" transform="rotate(-40 8 8)" fill="none" stroke="#f47a3c" stroke-width="1"/><path d="M1.5 8.5 C2 5 5 2 8.5 1.5 M14.5 7.5 C14 11 11 14 7.5 14.5 M1 14 L3.5 11.5 M15 2 L12.5 4.5" stroke="#f47a3c" stroke-width="1" fill="none"/></svg>
<svg style="left:18.5px;top:525.5px;" width="16" height="16" viewBox="0 0 16 16"><path d="M5.5 2.5 h5 M8 2.5 V9" stroke="#000" stroke-width="1.2" fill="none"/><circle cx="8" cy="11" r="2.8" fill="#000"/></svg>
<svg style="left:18.5px;top:543.5px;" width="16" height="16" viewBox="0 0 16 16"><path d="M5 3.5 h6 M5.5 3.5 L9.5 8" stroke="#000" stroke-width="1.2" fill="none"/><path d="M10 2.5 L11.5 3.5 L10 4.5Z" fill="#000"/><ellipse cx="8" cy="10.5" rx="2.6" ry="2.8" fill="#fff" stroke="#000" stroke-width="1.2"/></svg>
<svg style="left:18.5px;top:561.5px;" width="16" height="16" viewBox="0 0 16 16"><path d="M0.5 8.5 h2.5 M9.5 8.5 h6" stroke="#7a0c0c" stroke-width="1.2" fill="none"/><path d="M4.3 5.5 v6 M8 5.5 L4.8 8.5 L8 11.5" stroke="#7a0c0c" stroke-width="1.2" fill="none"/><path d="M10.5 6.3 L13 8.5 L10.5 10.7 Z" fill="#7a0c0c"/></svg>
<svg style="left:18.5px;top:579.5px;" width="16" height="16" viewBox="0 0 16 16"><path d="M0.5 8 h3.5 M12 8 h3.5" stroke="#000" stroke-width="1.2"/><path d="M5.5 11.5 v-1.5 h5.5 v1.5 M6.5 10 L7 5.5 h3 v4.5" stroke="#000" stroke-width="1.2" fill="none"/></svg>
<svg style="left:18.5px;top:597.5px;" width="16" height="16" viewBox="0 0 16 16"><path d="M0.5 8 h3.5 M12 8 h3.5" stroke="#1aa33a" stroke-width="1.2"/><path d="M6 5 v6.5 h2.5 a1.7 1.7 0 0 0 0 -3.4 h-2.5 M6 5 h2.3 a1.5 1.5 0 0 1 0 3.1" stroke="#1aa33a" stroke-width="1.2" fill="none"/></svg>
<svg style="left:18.5px;top:615.5px;" width="16" height="16" viewBox="0 0 16 16"><path d="M0.5 8 h3.5 M12 8 h3.5" stroke="#000" stroke-width="1.2"/><path d="M5.5 5.5 h5 M8 5.5 v6" stroke="#000" stroke-width="1.2" fill="none"/></svg>
<svg style="left:18.5px;top:633.5px;" width="16" height="16" viewBox="0 0 16 16"><path d="M0.5 8 h3.5 M12 8 h3.5" stroke="#1a9be0" stroke-width="1.2"/><path d="M10.5 5.5 h-4 v6" stroke="#1a9be0" stroke-width="1.2" fill="none"/></svg>
<svg style="left:18.5px;top:651.5px;" width="16" height="16" viewBox="0 0 16 16"><path d="M0.5 14.8 h5.5 M8.5 14.8 h7" stroke="#000" stroke-width="1.2"/></svg>
<svg style="left:18.5px;top:669.5px;" width="16" height="16" viewBox="0 0 16 16"><path d="M0.5 15.5 L9 7 M11 5 L15.5 0.5" stroke="#1414e6" stroke-width="1" fill="none"/><rect x="3.5" y="9.5" width="3" height="3" fill="#1414e6"/></svg>
<svg style="left:18.5px;top:687.5px;" width="16" height="16" viewBox="0 0 16 16"><path d="M0.5 15 L9 6.5 M11 4.5 L15 0.5 M4.5 6.5 h4.7 v4.7" stroke="#ff1a1a" stroke-width="1" fill="none"/></svg>
<svg style="left:18.5px;top:705.5px;" width="16" height="16" viewBox="0 0 16 16"><path d="M0.5 15 L9 6.5 M11 4.5 L15 0.5 M4.5 6.5 h4.7 v4.7 M2.5 8.7 h4.5 v4.5" stroke="#ff1a1a" stroke-width="1" fill="none"/></svg>
<svg style="left:18.5px;top:723.5px;" width="16" height="16" viewBox="0 0 16 16"><rect x="3.5" y="4" width="9" height="8" fill="#fff" stroke="#000" stroke-width="1.2"/><rect x="6" y="6" width="4" height="4" rx="1.5" fill="none" stroke="#000" stroke-width="1.1"/><path d="M0.5 6 h2 M0.5 10 h2 M13.5 6 h2 M13.5 10 h2" stroke="#000" stroke-width="1.1" stroke-dasharray="1 1"/></svg>
<svg style="left:18.5px;top:741.5px;" width="16" height="16" viewBox="0 0 16 16"><circle cx="8" cy="8" r="6" fill="#fff" stroke="#000" stroke-width="1.2"/><path d="M4 4 L12 12" stroke="#000" stroke-width="1.2"/></svg>
<svg style="left:18.5px;top:759.5px;" width="16" height="16" viewBox="0 0 16 16"><rect x="0.8" y="1.8" width="14" height="13.4" fill="#fff" stroke="#000" stroke-width="1.2"/><path d="M3 5 q1.7 2 3.5 0 M8.5 8 q1.7 2 3.5 0 M4 11 q1.7 2 3.5 0" stroke="#8a1010" stroke-width="1" fill="none"/></svg>
<svg style="left:18.5px;top:777.5px;" width="16" height="16" viewBox="0 0 16 16"><rect x="0.5" y="6.5" width="4" height="3" fill="#000"/><rect x="11.5" y="6.5" width="4" height="3" fill="#000"/><path d="M4 8 h1.3 M10.7 8 h1.3" stroke="#000" stroke-width="1"/><circle cx="8" cy="8" r="1.5" fill="#000"/></svg>
<div class="t" style="left:20.50px;top:650px;font-size:14px;line-height:18px;color:#000;font-weight:bold;font-family:'Liberation Serif',serif;">Т</div>
<div class="t" style="left:28.50px;top:652px;font-size:12px;line-height:16px;color:#000;font-weight:bold;font-family:'Liberation Serif',serif;">т</div>
<svg style="left:240px;top:207.0px;" width="16" height="16" viewBox="0 0 16 16"><path d="M0.5 10 L6 1.5 M3 10 L8.5 1.5 M5.5 10 L11 1.5 M8 10 L10 7" stroke="#000" stroke-width="1" fill="none"/><path d="M8.5 4.5 l0 9.5 l2.3 -2 l1.7 3.6 l1.6 -0.8 l-1.7 -3.5 l3 -0.2 Z" fill="#fff" stroke="#000" stroke-width="0.9"/></svg>
<svg style="left:265px;top:207.0px;" width="16" height="16" viewBox="0 0 16 16"><path d="M3.5 1 h-2.5 v12 h2.5 M9.5 1 h1.5 v3" stroke="#000" stroke-width="1" fill="none"/><rect x="4" y="2" width="4.2" height="4.2" fill="#bfe8c6" stroke="#2fa84f" stroke-width="0.9"/><rect x="4" y="8" width="4.2" height="4.2" fill="#bfe8c6" stroke="#2fa84f" stroke-width="0.9"/><path d="M8.8 5 l0 9.5 l2.3 -2 l1.7 3.6 l1.6 -0.8 l-1.7 -3.5 l3 -0.2 Z" fill="#fff" stroke="#000" stroke-width="0.9"/></svg>
<svg style="left:240px;top:231.9px;" width="16" height="16" viewBox="0 0 16 16"><path d="M8.5 4.5 V15 M11.5 3.5 V14 M5 8.5 H15 M5 11.5 H14.5 M5 11.5 L11.5 4 M8.5 15 L15 8.5" stroke="#444" stroke-width="0.8" fill="none"/><circle cx="3.8" cy="10" r="3.2" fill="#fbc45a"/><path d="M2.6 13.2 h2.4 l-1.2 2 Z" fill="#333"/></svg>
<div class="t" style="left:248.50px;top:229px;font-size:10px;line-height:13px;color:#f00;font-weight:bold;">Z</div>
<svg style="left:265px;top:231.9px;" width="16" height="16" viewBox="0 0 16 16"><path d="M8.5 4.5 V15 M11.5 3.5 V14 M5 8.5 H15 M5 11.5 H14.5 M5 11.5 L11.5 4 M8.5 15 L15 8.5" stroke="#444" stroke-width="0.8" fill="none"/><circle cx="3.8" cy="10" r="3.2" fill="#fbc45a"/><path d="M2.6 13.2 h2.4 l-1.2 2 Z" fill="#333"/></svg>
<div class="t" style="left:273.50px;top:229px;font-size:10px;line-height:13px;color:#00f;font-weight:bold;">C</div>
<div class="t" style="left:240.00px;top:256px;font-size:8px;line-height:11px;color:#000;letter-spacing:-0.191px;">12,3</div>
<svg style="left:240px;top:256.8px;" width="16" height="16" viewBox="0 0 16 16"><path d="M3.5 9.3 L6.2 12 L3.5 14.7 L0.8 12 Z" fill="#fff" stroke="#000" stroke-width="1.1"/></svg>
<svg style="left:265px;top:256.8px;" width="16" height="16" viewBox="0 0 16 16"><path d="M6.5 14 L15.5 14 L15.5 7.5 Z" fill="#9a9a9a"/><circle cx="2" cy="13.5" r="1.3" fill="#fff" stroke="#000" stroke-width="1"/></svg>
<svg style="left:265px;top:256.8px;" width="16" height="16" viewBox="0 0 16 16"><text x="2.5" y="12" font-size="8.5" font-family="Liberation Sans, sans-serif" fill="#000" transform="rotate(-42 2.5 12)" letter-spacing="-0.2">123</text></svg>
<div class="t" style="left:243.50px;top:280px;font-size:7.5px;line-height:11px;color:#000;letter-spacing:-0.508px;">100</div>
<div class="t" style="left:243.50px;top:288px;font-size:7.5px;line-height:11px;color:#000;letter-spacing:-0.508px;">100</div>
<svg style="left:240px;top:281.7px;" width="16" height="16" viewBox="0 0 16 16"><path d="M3 7.6 h13" stroke="#000" stroke-width="0.9"/><circle cx="1.6" cy="13.3" r="1.3" fill="#fff" stroke="#000" stroke-width="1"/></svg>
<svg style="left:265px;top:281.7px;" width="16" height="16" viewBox="0 0 16 16"><rect x="6.5" y="2.5" width="8" height="11" fill="#fff" stroke="#222" stroke-width="1"/><rect x="8" y="4" width="5" height="1.6" fill="#222"/><path d="M8 7.5 h2 M11 7.5 h2 M8 9.5 h2 M11 9.5 h2 M8 11.5 h2 M11 11.5 h2" stroke="#222" stroke-width="0.9"/><circle cx="2" cy="13" r="1.3" fill="#fff" stroke="#000" stroke-width="1"/></svg>
<svg style="left:240px;top:306.6px;" width="16" height="16" viewBox="0 0 16 16"><path d="M2 13 L13 2.5" stroke="#000" stroke-width="0.9"/><path d="M2 8.5 L6.5 4 M2 8.5 v-3 M2 8.5 h3 M8 11.5 L11.5 8 M11.5 8 v3 M11.5 8 h-3" stroke="#000" stroke-width="1.5" fill="none"/><circle cx="2" cy="13.5" r="1.6" fill="#fff" stroke="#000" stroke-width="1"/><circle cx="13.5" cy="2" r="1.6" fill="#fff" stroke="#000" stroke-width="1"/></svg>
<svg style="left:265px;top:306.6px;" width="16" height="16" viewBox="0 0 16 16"><path d="M2 12 C4 9 6.5 13 10 11.5 C14.5 10 14.5 5 11.5 4.5" stroke="#000" stroke-width="0.9" fill="none"/><rect x="7.5" y="2.3" width="4.6" height="4.6" fill="#ffd91a"/><path d="M7.5 2.3 l4.6 4.6 M12.1 2.3 l-4.6 4.6 M7.5 2.3 h4.6 v4.6 h-4.6 Z" stroke="#f04a00" stroke-width="0.8" fill="none" stroke-dasharray="1 0.6"/><circle cx="2" cy="12.2" r="1.6" fill="#fff" stroke="#000" stroke-width="1"/><circle cx="10" cy="11.8" r="1.6" fill="#fff" stroke="#000" stroke-width="1"/></svg>
<svg style="left:240px;top:331.5px;" width="16" height="16" viewBox="0 0 16 16"><path d="M2 14 L13 2.5" stroke="#000" stroke-width="0.9"/><path d="M0.5 3.2 h5 M3 0.7 v5" stroke="#000" stroke-width="1.7"/><path d="M10 9.5 L13.5 13 M10 9.5 v3.4 M10 9.5 h3.4" stroke="#000" stroke-width="1.6" fill="none"/><circle cx="2" cy="14" r="1.6" fill="#fff" stroke="#000" stroke-width="1"/><circle cx="7.8" cy="8" r="1.6" fill="#fff" stroke="#000" stroke-width="1"/><circle cx="13.8" cy="2" r="1.6" fill="#fff" stroke="#000" stroke-width="1"/></svg>
<svg style="left:265px;top:331.5px;" width="16" height="16" viewBox="0 0 16 16"><path d="M2 14 L13 2.5" stroke="#000" stroke-width="0.9"/><path d="M0.5 3 h5.5" stroke="#000" stroke-width="1.7"/><path d="M10 9.5 L13.5 13 M10 9.5 v3.4 M10 9.5 h3.4" stroke="#000" stroke-width="1.6" fill="none"/><circle cx="2" cy="14" r="1.6" fill="#fff" stroke="#000" stroke-width="1"/><circle cx="7.8" cy="8" r="1.6" fill="#fff" stroke="#000" stroke-width="1"/></svg>
<svg style="left:240px;top:356.4px;" width="16" height="16" viewBox="0 0 16 16"><path d="M2 14 L13.5 2.5" stroke="#000" stroke-width="0.9"/><path d="M0.5 3 h5.5" stroke="#000" stroke-width="1.7"/><circle cx="2" cy="14" r="1.6" fill="#fff" stroke="#000" stroke-width="1"/><circle cx="6" cy="10" r="1.6" fill="#fff" stroke="#000" stroke-width="1"/><circle cx="10" cy="6" r="1.6" fill="#fff" stroke="#000" stroke-width="1"/><circle cx="13.8" cy="2.2" r="1.6" fill="#fff" stroke="#000" stroke-width="1"/></svg>
<svg style="left:265px;top:356.4px;" width="16" height="16" viewBox="0 0 16 16"><path d="M2 14 L13.5 2.5" stroke="#000" stroke-width="0.9"/><path d="M0.5 3 h5.5" stroke="#000" stroke-width="1.7"/><circle cx="2" cy="14" r="1.6" fill="#fff" stroke="#000" stroke-width="1"/><circle cx="7" cy="7.5" r="1.6" fill="#fff" stroke="#000" stroke-width="1"/><circle cx="9" cy="9" r="1.6" fill="#fff" stroke="#000" stroke-width="1"/><circle cx="13.8" cy="2.2" r="1.6" fill="#fff" stroke="#000" stroke-width="1"/></svg>
<svg style="left:240px;top:381.29999999999995px;" width="16" height="16" viewBox="0 0 16 16"><path d="M2 14 L13.5 2.5 M6 8 L9.5 11.5" stroke="#000" stroke-width="0.9"/><circle cx="2" cy="14" r="1.6" fill="#fff" stroke="#000" stroke-width="1"/><circle cx="13.8" cy="2.2" r="1.6" fill="#fff" stroke="#000" stroke-width="1"/></svg>
<svg style="left:265px;top:381.29999999999995px;" width="16" height="16" viewBox="0 0 16 16"><path d="M2 14 C3 8 8 11 11 9 C13.5 7.5 13.5 5 13.8 3" stroke="#000" stroke-width="1" fill="none"/><circle cx="2" cy="14" r="1.6" fill="#fff" stroke="#000" stroke-width="1"/><circle cx="13.8" cy="2.2" r="1.6" fill="#fff" stroke="#000" stroke-width="1"/></svg>
<svg style="left:240px;top:406.2px;" width="16" height="16" viewBox="0 0 16 16"><path d="M2 12.5 L13.5 1.5 M2 12.5 C1.5 5 6 0.5 13.5 1.5" stroke="#000" stroke-width="0.9" fill="none"/><path d="M4.5 3.5 L10 9 M4.5 3.5 v3.2 M4.5 3.5 h3.2" stroke="#000" stroke-width="1.5" fill="none"/><circle cx="2" cy="13" r="1.6" fill="#fff" stroke="#000" stroke-width="1"/><circle cx="14" cy="1.5" r="1.6" fill="#fff" stroke="#000" stroke-width="1"/></svg>
<svg style="left:265px;top:406.2px;" width="16" height="16" viewBox="0 0 16 16"><path d="M2 12.5 L13.5 1.5 M2 12.5 C1.5 5 6 0.5 13.5 1.5" stroke="#000" stroke-width="0.9" fill="none"/><path d="M2.5 1.5 L7.5 6.5 M7.5 6.5 v-3.2 M7.5 6.5 h-3.2" stroke="#000" stroke-width="1.5" fill="none"/><circle cx="2" cy="13" r="1.6" fill="#fff" stroke="#000" stroke-width="1"/><circle cx="14" cy="1.5" r="1.6" fill="#fff" stroke="#000" stroke-width="1"/></svg>
<svg style="left:252.5px;top:431.1px;" width="16" height="16" viewBox="0 0 16 16"><path d="M2.5 13.5 L10 6.5" stroke="#000" stroke-width="3.6" stroke-linecap="round"/><path d="M10 6.5 L14 2.5" stroke="#000" stroke-width="0.9"/><circle cx="2.8" cy="13.3" r="1.2" fill="#fff" stroke="#000" stroke-width="1"/><circle cx="9.8" cy="6.7" r="1.2" fill="#fff" stroke="#000" stroke-width="1"/><circle cx="14.3" cy="2" r="1.3" fill="#fff" stroke="#000" stroke-width="1"/></svg>
<div class="t" style="left:251.00px;top:455px;font-size:9.5px;line-height:13px;color:#000;letter-spacing:-1.066px;">2d</div>
<svg style="left:252.5px;top:456.0px;" width="16" height="16" viewBox="0 0 16 16"><path d="M4 14 L14 4" stroke="#000" stroke-width="0.9"/><circle cx="4" cy="14" r="1.6" fill="#fff" stroke="#000" stroke-width="1"/><circle cx="14.3" cy="3.7" r="1.6" fill="#fff" stroke="#000" stroke-width="1"/></svg>
<svg style="left:240px;top:480.9px;" width="16" height="16" viewBox="0 0 16 16"><path d="M1.5 2.5 h9 M2 2.5 v11 h7.5 v-11" stroke="#000" stroke-width="1" fill="none"/><circle cx="2" cy="14" r="1.6" fill="#fff" stroke="#000" stroke-width="1"/><circle cx="9.5" cy="14" r="1.6" fill="#fff" stroke="#000" stroke-width="1"/><circle cx="14" cy="2" r="1.6" fill="#fff" stroke="#000" stroke-width="1"/></svg>
<svg style="left:265px;top:480.9px;" width="16" height="16" viewBox="0 0 16 16"><path d="M2 14 h12 V2 h-6 v3 C9 8 6 8.5 2 8 Z" stroke="#000" stroke-width="1" fill="none"/><circle cx="2" cy="14" r="1.6" fill="#fff" stroke="#000" stroke-width="1"/><circle cx="14" cy="14" r="1.6" fill="#fff" stroke="#000" stroke-width="1"/><circle cx="14" cy="2" r="1.6" fill="#fff" stroke="#000" stroke-width="1"/><circle cx="8" cy="2" r="1.6" fill="#fff" stroke="#000" stroke-width="1"/><circle cx="8" cy="8" r="1.6" fill="#fff" stroke="#000" stroke-width="1"/><circle cx="2" cy="8" r="1.6" fill="#fff" stroke="#000" stroke-width="1"/></svg>
<svg style="left:252.5px;top:505.79999999999995px;" width="16" height="16" viewBox="0 0 16 16"><path d="M1.5 2 h14 M2.8 2 v6 M5.8 2 v13 M8.8 2 v4 M11.5 2 v3" stroke="#000" stroke-width="1" fill="none"/><path d="M8 13 L9 9.8 L14.8 4 L16.8 6 L11 11.8 Z" fill="#bbb" stroke="#333" stroke-width="0.8"/><path d="M9.8 9 L12 11.2 M11 7.8 L13.2 10 M12.3 6.5 L14.5 8.7" stroke="#333" stroke-width="0.6"/></svg>
<svg style="left:240px;top:530.7px;" width="16" height="16" viewBox="0 0 16 16"><path d="M5 10.5 L14.5 10.5 L14.5 3 Z" fill="#a8a8a8"/><path d="M1.5 14 h12" stroke="#000" stroke-width="1"/><path d="M2.5 3 L6.5 7 M2.5 3 v3.5 M2.5 3 h3.5" stroke="#000" stroke-width="1.7" fill="none"/><circle cx="1.8" cy="14" r="1.6" fill="#fff" stroke="#000" stroke-width="1"/><circle cx="14" cy="14" r="1.6" fill="#fff" stroke="#000" stroke-width="1"/></svg>
<svg style="left:265px;top:530.7px;" width="16" height="16" viewBox="0 0 16 16"><rect x="1.5" y="1.5" width="13.5" height="13.5" fill="#fff" stroke="#888" stroke-width="1"/></svg>
<div class="t" style="left:269.20px;top:531px;font-size:13px;line-height:17px;color:#000;font-weight:bold;font-family:'Liberation Serif',serif;">T</div>
<svg style="left:252.5px;top:555.5999999999999px;" width="16" height="16" viewBox="0 0 16 16"><path d="M7 0.5 l6 5 M13 0.5 l-6 5" stroke="#000" stroke-width="1.2"/><path d="M3.5 11 C3.5 8 4.5 7.3 6 7.3 H15" stroke="#000" stroke-width="1" fill="none"/><path d="M7 9 L10 12 L13 9 M10 12 v3" stroke="#000" stroke-width="1.6" fill="none"/><circle cx="2.5" cy="12.5" r="1.4" fill="#fff" stroke="#000" stroke-width="1"/></svg>
<svg style="left:252.5px;top:580.5px;" width="16" height="16" viewBox="0 0 16 16"><path d="M3 9 C3 5 5 3.5 7 3.5 M12 6.5 C12 10 10.5 12 8.5 12.5" stroke="#777" stroke-width="0.9" fill="none"/><rect x="8.8" y="0.8" width="6" height="6" fill="#fff" stroke="#000" stroke-width="1.5"/><path d="M10 2 l3.6 3.6 M13.6 2 l-3.6 3.6" stroke="#000" stroke-width="0.8"/><circle cx="3.5" cy="12" r="2.8" fill="#fff" stroke="#000" stroke-width="1"/><circle cx="3.5" cy="12" r="1" fill="#000"/></svg>
<svg style="left:252.5px;top:605.4px;" width="16" height="16" viewBox="0 0 16 16"><path d="M3 3.5 L7.5 10.5 L12.5 4.5 V13" stroke="#000" stroke-width="0.9" fill="none"/><rect x="0.7999999999999998" y="1.2999999999999998" width="4.4" height="4.4" fill="#ffd91a"/><path d="M0.7999999999999998 1.2999999999999998 l4.4 4.4 M5.2 1.2999999999999998 l-4.4 4.4 M0.7999999999999998 1.2999999999999998 h4.4 v4.4 h-4.4 Z" stroke="#f04a00" stroke-width="0.8" fill="none" stroke-dasharray="1 0.55"/><rect x="5.3" y="8.3" width="4.4" height="4.4" fill="#ffd91a"/><path d="M5.3 8.3 l4.4 4.4 M9.7 8.3 l-4.4 4.4 M5.3 8.3 h4.4 v4.4 h-4.4 Z" stroke="#f04a00" stroke-width="0.8" fill="none" stroke-dasharray="1 0.55"/><rect x="10.3" y="2.3" width="4.4" height="4.4" fill="#ffd91a"/><path d="M10.3 2.3 l4.4 4.4 M14.7 2.3 l-4.4 4.4 M10.3 2.3 h4.4 v4.4 h-4.4 Z" stroke="#f04a00" stroke-width="0.8" fill="none" stroke-dasharray="1 0.55"/><rect x="10.3" y="10.8" width="4.4" height="4.4" fill="#ffd91a"/><path d="M10.3 10.8 l4.4 4.4 M14.7 10.8 l-4.4 4.4 M10.3 10.8 h4.4 v4.4 h-4.4 Z" stroke="#f04a00" stroke-width="0.8" fill="none" stroke-dasharray="1 0.55"/></svg>
<svg style="left:252.5px;top:630.3px;" width="16" height="16" viewBox="0 0 16 16"><path d="M1 2 h4.5 l2.5 2.5 v8.5 h-7 Z" fill="#fff" stroke="#000" stroke-width="1"/><path d="M2.5 6.5 h4 M2.5 8.5 h4 M2.5 10.5 h4" stroke="#000" stroke-width="0.8"/><path d="M6 2.2 h6.5 v2.5" stroke="#000" stroke-width="1.6" fill="none"/><path d="M9.8 4.5 h5.4 L12.5 7.5 Z" fill="#000"/><path d="M12.5 9 L15 11.5 L12.5 14 L10 11.5 Z" fill="#fff" stroke="#000" stroke-width="1.1"/></svg>
<div style="left:15px;top:872px;width:219px;height:15px;background:#f0f0f0;"></div>
<div style="left:33px;top:872px;width:149px;height:15px;background:#cdcdcd;"></div>
<svg style="left:20px;top:875px;" width="8" height="9" viewBox="0 0 8 9"><path d="M6.5 0.8 L1.5 4.5 L6.5 8.2" stroke="#444" stroke-width="1.7" fill="none"/></svg>
<svg style="left:222px;top:875px;" width="8" height="9" viewBox="0 0 8 9"><path d="M1.5 0.8 L6.5 4.5 L1.5 8.2" stroke="#444" stroke-width="1.7" fill="none"/></svg>
<svg style="left:246px;top:858px;" width="30" height="30" viewBox="0 0 30 30"><circle cx="15" cy="15" r="14.6" fill="#2a9fd9"/><path d="M6.5 14.8 L22.5 8.3 L19.8 21.8 L14.8 18.2 L12.3 20.8 L12 16.8 L19.5 10.8 L10.5 16.2 Z" fill="#fff"/></svg>
<svg style="left:19px;top:888px;" width="16" height="14" viewBox="0 0 16 14"><rect x="0.7" y="4.7" width="13.6" height="8.6" fill="#fff" stroke="#000" stroke-width="1.4"/><path d="M5 3.5 L7.5 6 L12.5 0.8" stroke="#1fc02f" stroke-width="2.2" fill="none"/></svg>
<div class="t" style="left:20.70px;top:893px;font-size:8px;line-height:11px;color:#000;letter-spacing:-0.062px;font-weight:bold;">0.0</div>
<div class="t" style="left:39.50px;top:890px;font-size:11px;line-height:14px;color:#000;letter-spacing:-0.325px;">UNITS</div>
<svg style="left:76.3px;top:890.3px;" width="12.5" height="12.5" viewBox="0 0 12.5 12.5"><rect x="0.5" y="0.5" width="11.5" height="11.5" fill="#fff" stroke="#333" stroke-width="1"/></svg>
<div class="t" style="left:91.60px;top:890px;font-size:11px;line-height:14px;color:#000;letter-spacing:-0.307px;">СКМ</div>
<svg style="left:121.2px;top:890.3px;" width="12.5" height="12.5" viewBox="0 0 12.5 12.5"><rect x="0.5" y="0.5" width="11.5" height="11.5" fill="#fff" stroke="#333" stroke-width="1"/><path d="M2.5 6.2 L5 8.8 L10 3" stroke="#222" stroke-width="1.1" fill="none"/></svg>
<div class="t" style="left:137.20px;top:890px;font-size:11px;line-height:14px;color:#000;letter-spacing:-0.298px;">МВЛ</div>
<svg style="left:166.3px;top:890.3px;" width="12.5" height="12.5" viewBox="0 0 12.5 12.5"><rect x="0.5" y="0.5" width="11.5" height="11.5" fill="#fff" stroke="#333" stroke-width="1"/></svg>
<div class="t" style="left:181.70px;top:890px;font-size:11px;line-height:14px;color:#000;letter-spacing:-0.246px;">OSNAPZ</div>
<div class="t" style="left:256.80px;top:890px;font-size:11px;line-height:14px;color:#000;">0</div>
<div style="left:15px;top:906px;width:274px;height:1px;background:#dcdcdc;"></div>
<div style="left:15px;top:907px;width:274px;height:17px;background:#f0f0f0;"></div>
<svg style="left:16.4px;top:910.4px;" width="11" height="11" viewBox="0 0 11 11"><defs><radialGradient id="gdot" cx="0.4" cy="0.35" r="0.7"><stop offset="0" stop-color="#8ee05a"/><stop offset="1" stop-color="#3a9a1e"/></radialGradient></defs><circle cx="5.5" cy="5.5" r="5.2" fill="url(#gdot)"/></svg>
<div class="t" style="left:46.80px;top:909px;font-size:11px;line-height:14px;color:#000;letter-spacing:-0.044px;">версия 2021.9.25 обновление не требуется!</div>
<div style="left:14px;top:924px;width:276px;height:4px;background:linear-gradient(#7a7a7a,#3b3b3b);"></div>
<div style="left:289px;top:174px;width:1.5px;height:751px;background:#3a3a3a;"></div>
<svg style="left:17px;top:156px;" width="5" height="9" viewBox="0 0 5 9"><rect x="0" y="0" width="1" height="1" fill="#6e6e6e"/><rect x="0" y="2" width="1" height="1" fill="#6e6e6e"/><rect x="0" y="4" width="1" height="1" fill="#6e6e6e"/><rect x="0" y="6" width="1" height="1" fill="#6e6e6e"/><rect x="0" y="8" width="1" height="1" fill="#6e6e6e"/><rect x="2" y="0" width="1" height="1" fill="#6e6e6e"/><rect x="2" y="2" width="1" height="1" fill="#6e6e6e"/><rect x="2" y="4" width="1" height="1" fill="#6e6e6e"/><rect x="2" y="6" width="1" height="1" fill="#6e6e6e"/><rect x="2" y="8" width="1" height="1" fill="#6e6e6e"/></svg>
<svg style="left:63.8px;top:25.0px;" width="16" height="16" viewBox="0 0 16 16"><path d="M0 2 H11 L16 6.5 V14 H0 Z" fill="#fff"/><path d="M11 2 V6.5 H16 Z" fill="#cfcfcf"/></svg>
<svg style="left:87.8px;top:25.0px;" width="16" height="16" viewBox="0 0 16 16"><path d="M0.5 13.5 V2.5 H6 L7.5 4.5 H12.5 V6.5 H4 Z" fill="#fff"/><path d="M0.5 14 L4 7 H16 L12.5 14 Z" fill="#e4e4e4"/></svg>
<svg style="left:112.2px;top:25.0px;" width="16" height="16" viewBox="0 0 16 16"><path d="M1 1 H15 V14.5 H2.5 L1 13 Z" fill="#d0d0d0"/><rect x="4" y="1" width="8" height="5.5" fill="#fff"/><rect x="4" y="9.5" width="8.5" height="5" fill="#fff"/><rect x="5.2" y="10.8" width="1.3" height="2.5" fill="#666"/></svg>
<svg style="left:136.2px;top:25.0px;" width="16" height="16" viewBox="0 0 16 16"><path d="M1 1 H15 V14.5 H2.5 L1 13 Z" fill="#d0d0d0"/><rect x="4" y="1" width="8" height="5.5" fill="#fff"/><rect x="4" y="9.5" width="5" height="5" fill="#fff"/><path d="M7 13.5 L12.5 8 L15 10.5 L9.5 16 L6.5 16.5 Z" fill="#f2cd6b"/><path d="M12.5 8 L13.7 6.8 L16.2 9.3 L15 10.5 Z" fill="#f0525a"/></svg>
<svg style="left:160.1px;top:25.0px;" width="16" height="16" viewBox="0 0 16 16"><rect x="2" y="0.5" width="8.5" height="15" rx="1" fill="#d6d6d6"/><rect x="3.2" y="2.5" width="6.1" height="10" fill="#5a5a5a"/><path d="M8 15.5 V9.5 H11 L12 10.8 H15 V15.5 Z" fill="#e8a93a"/><path d="M8 15.5 L9.8 12 H16 L14.5 15.5 Z" fill="#f6cc6a"/></svg>
<svg style="left:184.1px;top:25.0px;" width="16" height="16" viewBox="0 0 16 16"><rect x="5" y="0.5" width="9" height="15" rx="1" fill="#d6d6d6"/><rect x="6.2" y="2.5" width="6.6" height="10" fill="#5a5a5a"/><path d="M0.5 5 H5.5 V2.5 L10 6.2 L5.5 10 V7.5 H0.5 Z" fill="#4aa3e8"/></svg>
<svg style="left:208.0px;top:25.0px;" width="16" height="16" viewBox="0 0 16 16"><rect x="3.5" y="1" width="9" height="5" fill="#fff"/><path d="M0.5 5 H15.5 V12 H12.5 V9.5 H3.5 V12 H0.5 Z" fill="#fff"/><rect x="3.5" y="10" width="9" height="4.5" fill="#63bdf3"/><rect x="3.5" y="4.6" width="9" height="1" fill="#777"/></svg>
<svg style="left:232.0px;top:25.0px;" width="16" height="16" viewBox="0 0 16 16"><path d="M0.5 7 L7 2 V5 C11.5 5 15 6.5 15.5 11.5 C13.5 9.5 11 9 7 9 V12 Z" fill="#e6e6e6"/></svg>
<svg style="left:267.4px;top:25.0px;" width="16" height="16" viewBox="0 0 16 16"><path d="M15.5 7 L9 2 V5 C4.5 5 1 6.5 0.5 11.5 C2.5 9.5 5 9 9 9 V12 Z" fill="#a0a0a0"/></svg>
<svg style="left:254.10000000000002px;top:31.75px;" width="6" height="3.5" viewBox="0 0 6 3.5"><path d="M0 0 H6 L3.0 3.5 Z" fill="#f0f0f0"/></svg>
<svg style="left:290.2px;top:31.75px;" width="6" height="3.5" viewBox="0 0 6 3.5"><path d="M0 0 H6 L3.0 3.5 Z" fill="#b0b0b0"/></svg>
<svg style="left:303.5px;top:28.5px;" width="9" height="9" viewBox="0 0 9 9"><path d="M0 1 H9" stroke="#fff" stroke-width="1.6"/><path d="M0 4 H9 L4.5 8.5 Z" fill="#fff"/></svg>
<svg style="left:17px;top:24px;" width="36" height="36" viewBox="0 0 36 36"><defs><linearGradient id="alogo" x1="0" y1="0" x2="1" y2="1"><stop offset="0" stop-color="#e8262d"/><stop offset="1" stop-color="#9c1218"/></linearGradient></defs>
<path d="M2 26 L9.5 2.5 H16.5 L24 26 H19.2 L17.6 20.5 C13 19.5 9.5 20.5 7.2 22.2 L6.2 26 Z M10 15.8 C12 15 14 14.8 15.6 15.2 L13.1 7.5 Z" fill="url(#alogo)"/>
<path d="M2 26 L4.5 18.5 L6.2 26 Z M19.2 26 L20.5 19 L24 26 Z" fill="#f0555a" opacity="0.6"/>
<path d="M27.3 14.5 H34 L30.6 18.3 Z" fill="#2d3345"/></svg>
<svg style="left:565px;top:28px;" width="6" height="10" viewBox="0 0 6 10"><path d="M0.5 0.5 L5.5 5 L0.5 9.5 Z" fill="#f2f2f2"/></svg>
<div style="left:573px;top:22px;width:1px;height:22px;background:#555;"></div>
<svg style="left:756.8px;top:25.0px;" width="16" height="16" viewBox="0 0 16 16"><path d="M2 4 C2 1.5 6 1.5 6 4 V6 H10 V4 C10 1.5 14 1.5 14 4 L15.5 13 C15.5 15.5 10 15.5 10 13 V9 H6 V13 C6 15.5 0.5 15.5 0.5 13 Z" fill="#fff" stroke="#2d3345" stroke-width="0.9"/><path d="M6 6 V9 M10 6 V9" stroke="#2d3345" stroke-width="0.9"/></svg>
<svg style="left:780.8px;top:24.5px;" width="17" height="17" viewBox="0 0 17 17"><path d="M0.5 15 C0.5 12 3 11.5 5.5 10.5 V9 C3.5 7 3.5 1 8 1 C12.5 1 12.5 7 10.5 9 V10.5 C13 11.5 15.5 12 15.5 15 Z" fill="#fff" stroke="#2d3345" stroke-width="0.9"/></svg>
<svg style="left:886.7px;top:31.75px;" width="6" height="3.5" viewBox="0 0 6 3.5"><path d="M0 0 H6 L3.0 3.5 Z" fill="#f0f0f0"/></svg>
<svg style="left:903.0px;top:25.0px;" width="16" height="16" viewBox="0 0 16 16"><path d="M0.5 2 H3.5 L5.5 10.5 H13 L15 4.5 H4.2" fill="#fff" stroke="#1f3f73" stroke-width="1.1"/><circle cx="6.5" cy="13.5" r="1.5" fill="#1f3f73"/><circle cx="12" cy="13.5" r="1.5" fill="#1f3f73"/></svg>
<svg style="left:927.3px;top:25.0px;" width="16" height="16" viewBox="0 0 16 16"><path d="M8 2.5 L14 13 H2 Z" fill="none" stroke="#fff" stroke-width="3.4" stroke-linejoin="round"/><path d="M8 2.5 L14 13 H2 Z" fill="none" stroke="#1f3f73" stroke-width="1.3" stroke-linejoin="round"/><circle cx="8" cy="2.5" r="1.6" fill="#fff" stroke="#1f3f73" stroke-width="0.9"/><circle cx="2" cy="13" r="1.6" fill="#fff" stroke="#1f3f73" stroke-width="0.9"/><circle cx="14" cy="13" r="1.6" fill="#fff" stroke="#1f3f73" stroke-width="0.9"/></svg>
<svg style="left:947.4px;top:31.75px;" width="6" height="3.5" viewBox="0 0 6 3.5"><path d="M0 0 H6 L3.0 3.5 Z" fill="#f0f0f0"/></svg>
<div style="left:963px;top:24px;width:1px;height:18px;background:#8f8f8f;"></div>
<svg style="left:972px;top:24.5px;" width="17" height="17" viewBox="0 0 17 17"><circle cx="8.5" cy="8.5" r="7.6" fill="#fff" stroke="#2d3345" stroke-width="1.2"/></svg>
<div class="t" style="left:976.53px;top:25px;font-size:13px;line-height:17px;color:#1a2fa0;font-weight:bold;">?</div>
<svg style="left:995.8px;top:31.75px;" width="6" height="3.5" viewBox="0 0 6 3.5"><path d="M0 0 H6 L3.0 3.5 Z" fill="#f0f0f0"/></svg>
<svg style="left:1050px;top:28px;" width="10" height="1" viewBox="0 0 10 1"><path d="M0 0.5 H10" stroke="#999" stroke-width="1"/></svg>
<svg style="left:1095px;top:23px;" width="10" height="10" viewBox="0 0 10 10"><rect x="0.5" y="0.5" width="9" height="9" fill="none" stroke="#999" stroke-width="1"/></svg>
<svg style="left:1141px;top:23px;" width="10" height="10" viewBox="0 0 10 10"><path d="M0 0 L10 10 M10 0 L0 10" stroke="#999" stroke-width="1"/></svg>
<svg style="left:1120px;top:49px;" width="48" height="13" viewBox="0 0 48 13"><path d="M1 9 H11" stroke="#222" stroke-width="2"/><path d="M21.5 4 V1.9 H28.5 V8 H25" stroke="#222" stroke-width="1.2" fill="none"/><path d="M21.5 2.2 H28.5" stroke="#222" stroke-width="1.8"/><rect x="17.8" y="4.9" width="7" height="6.6" fill="none" stroke="#222" stroke-width="1.2"/><path d="M17.8 5.2 H24.8" stroke="#222" stroke-width="1.8"/><path d="M35.8 2.6 L43.2 9.6 M43.2 2.6 L35.8 9.6" stroke="#222" stroke-width="2.3"/></svg>
<div style="left:291.8px;top:894.3px;width:53px;height:33.3px;background:linear-gradient(#6c6c6c,#4a4a4a 60%,#3a3a3a);border:1px solid #3a3a3a;border-right:none;"></div>
<div style="left:344.5px;top:895px;width:823px;height:32.6px;background:#fff;border-radius:4px 0 0 4px;"></div>
<svg style="left:295px;top:902px;" width="5" height="17" viewBox="0 0 5 17"><rect x="0.0" y="0.0" width="1.5" height="1.5" fill="#aaa"/><rect x="0.0" y="2.5" width="1.5" height="1.5" fill="#aaa"/><rect x="0.0" y="5.0" width="1.5" height="1.5" fill="#aaa"/><rect x="0.0" y="7.5" width="1.5" height="1.5" fill="#aaa"/><rect x="0.0" y="10.0" width="1.5" height="1.5" fill="#aaa"/><rect x="0.0" y="12.5" width="1.5" height="1.5" fill="#aaa"/><rect x="0.0" y="15.0" width="1.5" height="1.5" fill="#aaa"/><rect x="2.5" y="0.0" width="1.5" height="1.5" fill="#aaa"/><rect x="2.5" y="2.5" width="1.5" height="1.5" fill="#aaa"/><rect x="2.5" y="5.0" width="1.5" height="1.5" fill="#aaa"/><rect x="2.5" y="7.5" width="1.5" height="1.5" fill="#aaa"/><rect x="2.5" y="10.0" width="1.5" height="1.5" fill="#aaa"/><rect x="2.5" y="12.5" width="1.5" height="1.5" fill="#aaa"/><rect x="2.5" y="15.0" width="1.5" height="1.5" fill="#aaa"/></svg>
<svg style="left:306.5px;top:907px;" width="9" height="9" viewBox="0 0 9 9"><path d="M0.8 0.8 L8.2 8.2 M8.2 0.8 L0.8 8.2" stroke="#fff" stroke-width="1.8"/></svg>
<svg style="left:325px;top:903px;" width="17" height="17" viewBox="0 0 17 17"><path d="M3 1.5 C5.5 0.5 8 2 7.8 5 L15 12.5 C16 14 14 16 12.5 15 L5.5 7.8 C3 8.5 0.5 6.5 1.2 3.5 L3.8 6 L6 3.8 Z" fill="#fff" stroke="#333" stroke-width="0.8"/></svg>
<div style="left:350.6px;top:904.4px;width:14px;height:13.2px;background:#dcdfe6;border:1px solid #8a93a8;border-radius:1.5px;"></div>
<svg style="left:352.5px;top:906.5px;" width="10" height="9" viewBox="0 0 10 9"><path d="M1 1.5 L4.5 4.5 L1 7.5" stroke="#222" stroke-width="1.2" fill="none"/><path d="M5.5 8 H9.5" stroke="#222" stroke-width="1.2"/></svg>
<svg style="left:368.2px;top:908.75px;" width="6" height="3.5" viewBox="0 0 6 3.5"><path d="M0 0 H6 L3.0 3.5 Z" fill="#777"/></svg>
<div class="t" style="left:381.00px;top:903px;font-size:12px;line-height:16px;color:#9a9a9a;letter-spacing:-0.216px;font-style:italic;font-family:'Liberation Mono',monospace;">Введите команду</div>
<div style="left:14px;top:927px;width:1154px;height:30.5px;background:#3b3b3b;"></div>
<div style="left:374.6px;top:929.5px;width:793.4px;height:28px;background:#4e4e4e;"></div>
<div style="left:376px;top:930.2px;width:210.29999999999995px;height:25px;border:1px solid #6e6e6e;"></div>
<div style="left:588px;top:930.2px;width:58px;height:25px;border:1px solid #6e6e6e;"></div>
<div style="left:647.6px;top:930.2px;width:63.89999999999998px;height:25px;border:1px solid #6e6e6e;"></div>
<div style="left:713.5px;top:930.2px;width:24.899999999999977px;height:25px;border:1px solid #6e6e6e;"></div>
<div style="left:739.6px;top:930.2px;width:102.0px;height:25px;border:1px solid #6e6e6e;"></div>
<div style="left:842.6px;top:930.2px;width:62.39999999999998px;height:25px;border:1px solid #6e6e6e;"></div>
<div style="left:906.5px;top:930.2px;width:23.899999999999977px;height:25px;border:1px solid #6e6e6e;"></div>
<div style="left:932.3px;top:930.2px;width:82.10000000000002px;height:25px;border:1px solid #6e6e6e;"></div>
<div style="left:1016.4px;top:930.2px;width:40.19999999999993px;height:25px;border:1px solid #6e6e6e;"></div>
<div style="left:1058.6px;top:930.2px;width:25.200000000000045px;height:25px;border:1px solid #6e6e6e;"></div>
<div style="left:1085.5px;top:930.2px;width:31.0px;height:25px;border:1px solid #6e6e6e;"></div>
<div style="left:1118.5px;top:930.2px;width:49.09999999999991px;height:25px;border:1px solid #6e6e6e;"></div>
<div class="t" style="left:401.70px;top:935px;font-size:12px;line-height:16px;color:#f2f2f2;letter-spacing:0.028px;">-18066.0872, -3619.9053, 0.0000</div>
<div class="t" style="left:592.70px;top:935px;font-size:12px;line-height:16px;color:#f2f2f2;letter-spacing:-0.390px;">МОДЕЛЬ</div>
<svg style="left:650.8px;top:933.8px;" width="18" height="18" viewBox="0 0 18 18"><path d="M0.5 4.5 H17.5 M0.5 9 H17.5 M0.5 13.5 H17.5 M4 1 V17 M9 1 V17 M14 1 V17" stroke="#e6e6e6" stroke-width="1" fill="none" /></svg>
<svg style="left:674.9px;top:933.8px;" width="18" height="18" viewBox="0 0 18 18"><rect x="2.0" y="2.0" width="2" height="2" fill="#e6e6e6"/><rect x="2.0" y="7.5" width="2" height="2" fill="#e6e6e6"/><rect x="2.0" y="13.0" width="2" height="2" fill="#e6e6e6"/><rect x="7.5" y="2.0" width="2" height="2" fill="#e6e6e6"/><rect x="7.5" y="7.5" width="2" height="2" fill="#e6e6e6"/><rect x="7.5" y="13.0" width="2" height="2" fill="#e6e6e6"/><rect x="13.0" y="2.0" width="2" height="2" fill="#e6e6e6"/><rect x="13.0" y="7.5" width="2" height="2" fill="#e6e6e6"/><rect x="13.0" y="13.0" width="2" height="2" fill="#e6e6e6"/></svg>
<svg style="left:699.9px;top:941.25px;" width="8" height="4.5" viewBox="0 0 8 4.5"><path d="M0 0 H8 L4.0 4.5 Z" fill="#fff"/></svg>
<svg style="left:717.2px;top:933.8px;" width="18" height="18" viewBox="0 0 18 18"><path d="M1 5.5 H8 M4.5 2 V9" stroke="#e6e6e6" stroke-width="1.2" fill="none" /><rect x="7" y="11" width="9" height="3.6" fill="#e6e6e6"/></svg>
<svg style="left:740.6px;top:933.8px;" width="18" height="18" viewBox="0 0 18 18"><path d="M2 0.5 V16.5 H17" stroke="#e6e6e6" stroke-width="1.2" fill="none" /><path d="M2 12 H6.5 V16.5" stroke="#e6e6e6" stroke-width="1" fill="none" /></svg>
<svg style="left:764.7px;top:933.8px;" width="18" height="18" viewBox="0 0 18 18"><circle cx="8.5" cy="10" r="6.3" fill="none" stroke="#e6e6e6" stroke-width="1.1"/><path d="M8.5 10 H17 M8.5 10 L15.5 2.5" stroke="#e6e6e6" stroke-width="1.1" fill="none" /></svg>
<svg style="left:790.7px;top:941.25px;" width="8" height="4.5" viewBox="0 0 8 4.5"><path d="M0 0 H8 L4.0 4.5 Z" fill="#fff"/></svg>
<svg style="left:804.2px;top:933.8px;" width="18" height="18" viewBox="0 0 18 18"><path d="M9 0.5 V17.5" stroke="#3ec46d" stroke-width="1.2" fill="none" /><path d="M3 2 L15 15.5" stroke="#e8474c" stroke-width="1.2" fill="none" /><rect x="7.5" y="7" width="3" height="3" fill="#4e4e4e" stroke="#fff" stroke-width="0.9"/></svg>
<svg style="left:829.3px;top:941.25px;" width="8" height="4.5" viewBox="0 0 8 4.5"><path d="M0 0 H8 L4.0 4.5 Z" fill="#fff"/></svg>
<svg style="left:844.0px;top:933.8px;" width="18" height="18" viewBox="0 0 18 18"><path d="M1 15.5 H17 M1 15.5 L14 3.5" stroke="#e6e6e6" stroke-width="1.2" fill="none" /><rect x="7" y="8.5" width="2.6" height="2.6" fill="#e6e6e6"/></svg>
<div style="left:867.7px;top:932px;width:21.5px;height:21.8px;background:#5b94d1;"></div>
<svg style="left:869.5px;top:933.8px;" width="18" height="18" viewBox="0 0 18 18"><path d="M4.5 4 H16 V16.5 H4.5 Z" stroke="#fff" stroke-width="1.2" fill="none" /><rect x="2" y="1.5" width="4.2" height="4.2" fill="#5b94d1" stroke="#fff" stroke-width="1.1"/></svg>
<svg style="left:893.4px;top:941.25px;" width="8" height="4.5" viewBox="0 0 8 4.5"><path d="M0 0 H8 L4.0 4.5 Z" fill="#fff"/></svg>
<svg style="left:908.7px;top:933.8px;" width="18" height="18" viewBox="0 0 18 18"><path d="M2 3 H16" stroke="#e6e6e6" stroke-width="1.3" fill="none" /><path d="M2 7 H12" stroke="#e6e6e6" stroke-width="2.4" fill="none" /><path d="M2 11 H16" stroke="#e6e6e6" stroke-width="1.3" fill="none" /><path d="M2 15 H9" stroke="#e6e6e6" stroke-width="2.8" fill="none" /></svg>
<div style="left:935px;top:932px;width:21.5px;height:21.8px;background:#5b94d1;"></div>
<svg style="left:935.5px;top:933.8px;" width="18" height="18" viewBox="0 0 18 18"><path d="M9 1.5 L11.2 10 L15.5 16 L9 12.5 L2.5 16 L6.8 10 Z" fill="#fff"/><circle cx="14.8" cy="5" r="1.9" fill="none" stroke="#fff" stroke-width="1.1"/></svg>
<svg style="left:960.0px;top:933.8px;" width="18" height="18" viewBox="0 0 18 18"><path d="M9 1.5 L11.2 10 L15.5 16 L9 12.5 L2.5 16 L6.8 10 Z" fill="#d0d0d0"/></svg>
<div class="t" style="left:985.50px;top:935px;font-size:12px;line-height:16px;color:#f2f2f2;letter-spacing:-1.091px;">1:1</div>
<svg style="left:1002.6px;top:941.25px;" width="8" height="4.5" viewBox="0 0 8 4.5"><path d="M0 0 H8 L4.0 4.5 Z" fill="#fff"/></svg>
<svg style="left:1019.0px;top:933.8px;" width="18" height="18" viewBox="0 0 18 18"><rect x="7.6" y="0.8" width="2.8" height="16.4" fill="#e6e6e6" transform="rotate(0 9 9)"/><rect x="7.6" y="0.8" width="2.8" height="16.4" fill="#e6e6e6" transform="rotate(45 9 9)"/><rect x="7.6" y="0.8" width="2.8" height="16.4" fill="#e6e6e6" transform="rotate(90 9 9)"/><rect x="7.6" y="0.8" width="2.8" height="16.4" fill="#e6e6e6" transform="rotate(135 9 9)"/><circle cx="9" cy="9" r="5.8" fill="#e6e6e6"/><circle cx="9" cy="9" r="2.6" fill="#4e4e4e"/></svg>
<svg style="left:1044.5px;top:941.25px;" width="8" height="4.5" viewBox="0 0 8 4.5"><path d="M0 0 H8 L4.0 4.5 Z" fill="#fff"/></svg>
<svg style="left:1062.3px;top:933.8px;" width="18" height="18" viewBox="0 0 18 18"><path d="M2 1.5 H8 V7.5 H2 Z M5 16.5 L8 11 L11 16.5 Z" stroke="#e6e6e6" stroke-width="1.1" fill="none" /><circle cx="14" cy="7" r="2.8" fill="none" stroke="#e6e6e6" stroke-width="1.1"/></svg>
<svg style="left:1091.3px;top:933.8px;" width="18" height="18" viewBox="0 0 18 18"><rect x="1.5" y="2" width="13.5" height="10" fill="#e6e6e6"/><path d="M1.5 12 L6 5 L9 9 L11 7 L15 12 Z" fill="#4e4e4e"/><circle cx="6" cy="4.3" r="1.3" fill="#3d93e0"/><path d="M13 8.5 L17.5 16.5 H8.5 Z" fill="#ee7a2a"/><path d="M13 11.5 V14" stroke="#fff" stroke-width="1.1"/></svg>
<svg style="left:1122.0px;top:933.8px;" width="18" height="18" viewBox="0 0 18 18"><path d="M2 3 H16.5 V15 H2 Z" stroke="#e6e6e6" stroke-width="1.2" fill="none" /><path d="M10.5 6 H13.5 V9 M13.5 6 L10.5 9 M8 12 H5 V9 M5 12 L8 9" stroke="#e6e6e6" stroke-width="1" fill="none" /></svg>
<svg style="left:1145.8px;top:933.8px;" width="18" height="18" viewBox="0 0 18 18"><path d="M1 3 H17 M1 9 H17 M1 15 H17" stroke="#e6e6e6" stroke-width="2" fill="none" /></svg>
<svg style="left:14px;top:928px;" width="230" height="22" viewBox="0 0 230 22">
<defs><linearGradient id="mtA" x1="0" y1="0" x2="0" y2="1"><stop offset="0" stop-color="#474747"/><stop offset="1" stop-color="#8c8c8c"/></linearGradient>
<linearGradient id="mtB" x1="0" y1="0" x2="0" y2="1"><stop offset="0" stop-color="#434343"/><stop offset="1" stop-color="#5e5e5e"/></linearGradient></defs>
<path d="M78 1.7 C84 1.7 84 18.5 91 18.5 L127 18.5 C133 18.5 133 1.7 139 1.7 Z" fill="url(#mtB)"/>
<path d="M132 1.7 C138 1.7 138 18.5 145 18.5 L181 18.5 C187 18.5 187 1.7 193 1.7 Z" fill="url(#mtB)"/>
<path d="M196 3 L217 3 C213 3 213 16 207 16 L195.5 16 C198 16 199 8 196 3 Z" fill="#585858"/>
<path d="M6.5 1.7 C13 1.7 12 18.5 19.5 18.5 L75 18.5 C82 18.5 81 1.7 87.5 1.7 Z" fill="url(#mtA)"/>
<path d="M201 9.5 h8 M205 5.5 v8" stroke="#dcdcdc" stroke-width="2" fill="none"/>
</svg>
<div class="t" style="left:37.70px;top:930px;font-size:12px;line-height:16px;color:#fff;letter-spacing:-0.292px;font-weight:bold;">Модель</div>
<div class="t" style="left:106.00px;top:930px;font-size:12px;line-height:16px;color:#b4b4b4;letter-spacing:-0.437px;">Лист1</div>
<div class="t" style="left:160.50px;top:930px;font-size:12px;line-height:16px;color:#b4b4b4;letter-spacing:-0.187px;">Лист2</div>
<svg style="left:0px;top:0px;pointer-events:none;" width="1183" height="972" viewBox="0 0 1183 972">
<defs><filter id="ash" x="-5%" y="-5%" width="110%" height="120%"><feDropShadow dx="0.8" dy="1.2" stdDeviation="0.6" flood-color="#000" flood-opacity="0.35"/></filter></defs>
<g filter="url(#ash)">
<path d="M239.2 303.2 L282.1 331.7 L316.4 354.5 L443.3 440.2 L535.9 503.6 L541.0 495.4 L548.9 521.2 L522.0 522.6 L527.9 515.1 L436.6 449.9 L312.5 360.1 L279.3 335.8 L237.8 305.2 Z" fill="#3777bb" stroke="#3777bb" stroke-width="1.2" stroke-linejoin="round"/>
<path d="M296.2 285.8 L440 280.6 L521 278.6 L521 267.5 L543 285.3 L521 303 L521 292.1 L440 291 L296.2 289.2 Z" fill="#9b62a8" stroke="#9b62a8" stroke-width="1.2" stroke-linejoin="round"/>
<path d="M276 638.1 L532.7 633.4 L532.7 622.5 L554 640 L532.7 657.5 L532.7 646.3 L276 642.5 Z" fill="#3777bb" stroke="#3777bb" stroke-width="1.2" stroke-linejoin="round"/>
</g>
<path d="M285.8 273 L285.8 255.5 Q285.8 252.5 282.8 252.5 L241.2 252.5 Q238.2 252.5 238.2 255.5 L238.2 299.8 Q238.2 302.8 241.2 302.8 L261 302.8" fill="none" stroke="#2e75b6" stroke-width="2.6"/>
<rect x="262.3" y="277.5" width="24" height="23.2" rx="3.5" fill="none" stroke="#a062b4" stroke-width="2.4"/>
<rect x="248" y="627" width="26.7" height="26" rx="4" fill="none" stroke="#2e75b6" stroke-width="2.6"/>
</svg>
<div style="left:552px;top:207px;width:273px;height:206px;background:#f0f0f0;border:1px solid #6f6f6f;box-shadow:0 4px 16px rgba(0,0,0,.35),0 0 3px rgba(0,0,0,.25);"></div>
<div style="left:553px;top:208px;width:271px;height:29.5px;background:#fff;"></div>
<div class="t" style="left:581.80px;top:215px;font-size:12px;line-height:16px;color:#000;letter-spacing:-0.014px;">Редактор высотных отметок</div>
<svg style="left:803.8px;top:217.5px;" width="10" height="10" viewBox="0 0 10 10"><path d="M0 0 L10 10 M10 0 L0 10" stroke="#111" stroke-width="1.1" fill="none"/></svg>
<svg style="left:562px;top:214px;" width="16" height="16" viewBox="0 0 16 16"><rect x="6.5" y="1.5" width="8" height="10" fill="#fff" stroke="#222"/><rect x="8" y="3" width="5" height="1.6" fill="#222"/><path d="M8 6.5h2M11 6.5h2M8 8.5h2M11 8.5h2" stroke="#222" stroke-width="1"/><circle cx="2.5" cy="11.5" r="1.4" fill="none" stroke="#222" stroke-width="0.9"/></svg>
<div style="left:557px;top:249px;width:112px;height:130px;border:1px solid #dcdcdc;"></div>
<div style="left:564px;top:248px;width:62.2px;height:3px;background:#f0f0f0;"></div>
<div class="t" style="left:566.00px;top:242px;font-size:11px;line-height:14px;color:#000;letter-spacing:-0.136px;">Выражение</div>
<div style="left:674px;top:249px;width:65px;height:130px;border:1px solid #dcdcdc;"></div>
<div style="left:680px;top:248px;width:50.2px;height:3px;background:#f0f0f0;"></div>
<div class="t" style="left:682.00px;top:242px;font-size:11px;line-height:14px;color:#000;letter-spacing:0.039px;">Точность</div>
<div style="left:743px;top:249px;width:77px;height:57px;border:1px solid #dcdcdc;"></div>
<div style="left:749.3px;top:248px;width:64.6px;height:3px;background:#f0f0f0;"></div>
<div class="t" style="left:751.30px;top:242px;font-size:11px;line-height:14px;color:#000;letter-spacing:0.158px;">Ставить "+"</div>
<svg style="left:570.3px;top:263px;" width="13" height="13" viewBox="0 0 13 13"><circle cx="6.5" cy="6.5" r="5.9" fill="#fdfdfd" stroke="#333c4d" stroke-width="1"/><path d="M2.6 9.4 A5 5 0 0 0 10.6 9.6" stroke="#d8d8d8" stroke-width="1.6" fill="none"/></svg>
<div class="t" style="left:587.70px;top:263px;font-size:11px;line-height:14px;color:#000;letter-spacing:-0.217px;">набор + число</div>
<svg style="left:570.3px;top:283px;" width="13" height="13" viewBox="0 0 13 13"><circle cx="6.5" cy="6.5" r="5.9" fill="#fdfdfd" stroke="#333c4d" stroke-width="1"/><path d="M2.6 9.4 A5 5 0 0 0 10.6 9.6" stroke="#d8d8d8" stroke-width="1.6" fill="none"/><circle cx="6.5" cy="6.5" r="2.6" fill="#2fa32f"/><circle cx="6" cy="6" r="1.1" fill="#7ce07c"/></svg>
<div class="t" style="left:587.70px;top:283px;font-size:11px;line-height:14px;color:#000;letter-spacing:-0.211px;">набор - число</div>
<svg style="left:570.3px;top:303px;" width="13" height="13" viewBox="0 0 13 13"><circle cx="6.5" cy="6.5" r="5.9" fill="#fdfdfd" stroke="#333c4d" stroke-width="1"/><path d="M2.6 9.4 A5 5 0 0 0 10.6 9.6" stroke="#d8d8d8" stroke-width="1.6" fill="none"/></svg>
<div class="t" style="left:587.70px;top:303px;font-size:11px;line-height:14px;color:#000;letter-spacing:-0.180px;">набор * число</div>
<svg style="left:570.3px;top:323px;" width="13" height="13" viewBox="0 0 13 13"><circle cx="6.5" cy="6.5" r="5.9" fill="#fdfdfd" stroke="#333c4d" stroke-width="1"/><path d="M2.6 9.4 A5 5 0 0 0 10.6 9.6" stroke="#d8d8d8" stroke-width="1.6" fill="none"/></svg>
<div class="t" style="left:587.70px;top:323px;font-size:11px;line-height:14px;color:#000;letter-spacing:0.006px;">набор / число</div>
<svg style="left:682.6px;top:263px;" width="13" height="13" viewBox="0 0 13 13"><circle cx="6.5" cy="6.5" r="5.9" fill="#fdfdfd" stroke="#333c4d" stroke-width="1"/><path d="M2.6 9.4 A5 5 0 0 0 10.6 9.6" stroke="#d8d8d8" stroke-width="1.6" fill="none"/></svg>
<div class="t" style="left:701.00px;top:263px;font-size:11px;line-height:14px;color:#000;">0</div>
<svg style="left:682.6px;top:283px;" width="13" height="13" viewBox="0 0 13 13"><circle cx="6.5" cy="6.5" r="5.9" fill="#fdfdfd" stroke="#333c4d" stroke-width="1"/><path d="M2.6 9.4 A5 5 0 0 0 10.6 9.6" stroke="#d8d8d8" stroke-width="1.6" fill="none"/></svg>
<div class="t" style="left:701.00px;top:283px;font-size:11px;line-height:14px;color:#000;">1</div>
<svg style="left:682.6px;top:303px;" width="13" height="13" viewBox="0 0 13 13"><circle cx="6.5" cy="6.5" r="5.9" fill="#fdfdfd" stroke="#333c4d" stroke-width="1"/><path d="M2.6 9.4 A5 5 0 0 0 10.6 9.6" stroke="#d8d8d8" stroke-width="1.6" fill="none"/><circle cx="6.5" cy="6.5" r="2.6" fill="#2fa32f"/><circle cx="6" cy="6" r="1.1" fill="#7ce07c"/></svg>
<div class="t" style="left:701.00px;top:303px;font-size:11px;line-height:14px;color:#000;">2</div>
<svg style="left:682.6px;top:323px;" width="13" height="13" viewBox="0 0 13 13"><circle cx="6.5" cy="6.5" r="5.9" fill="#fdfdfd" stroke="#333c4d" stroke-width="1"/><path d="M2.6 9.4 A5 5 0 0 0 10.6 9.6" stroke="#d8d8d8" stroke-width="1.6" fill="none"/></svg>
<div class="t" style="left:701.00px;top:323px;font-size:11px;line-height:14px;color:#000;">3</div>
<svg style="left:682.6px;top:343.3px;" width="13" height="13" viewBox="0 0 13 13"><circle cx="6.5" cy="6.5" r="5.9" fill="#fdfdfd" stroke="#333c4d" stroke-width="1"/><path d="M2.6 9.4 A5 5 0 0 0 10.6 9.6" stroke="#d8d8d8" stroke-width="1.6" fill="none"/></svg>
<div style="left:699px;top:341.4px;width:25px;height:19px;background:#fff;border:1px solid #7a7a7a;"></div>
<div class="t" style="left:701.50px;top:343px;font-size:11px;line-height:14px;color:#000;">2</div>
<div class="t" style="left:571.70px;top:343px;font-size:11px;line-height:14px;color:#000;letter-spacing:-0.198px;">Число:</div>
<div style="left:611.5px;top:341.4px;width:47.2px;height:19px;background:#fff;border:1px solid #7a7a7a;"></div>
<div class="t" style="left:613.50px;top:343px;font-size:11px;line-height:14px;color:#000;letter-spacing:-0.228px;">0.0000</div>
<svg style="left:752.9px;top:263.5px;" width="13" height="13" viewBox="0 0 13 13"><circle cx="6.5" cy="6.5" r="5.9" fill="#fdfdfd" stroke="#333c4d" stroke-width="1"/><path d="M2.6 9.4 A5 5 0 0 0 10.6 9.6" stroke="#d8d8d8" stroke-width="1.6" fill="none"/></svg>
<div class="t" style="left:770.80px;top:263px;font-size:11px;line-height:14px;color:#000;letter-spacing:0.433px;">Да</div>
<svg style="left:752.9px;top:283.5px;" width="13" height="13" viewBox="0 0 13 13"><circle cx="6.5" cy="6.5" r="5.9" fill="#fdfdfd" stroke="#333c4d" stroke-width="1"/><path d="M2.6 9.4 A5 5 0 0 0 10.6 9.6" stroke="#d8d8d8" stroke-width="1.6" fill="none"/><circle cx="6.5" cy="6.5" r="2.6" fill="#2fa32f"/><circle cx="6" cy="6" r="1.1" fill="#7ce07c"/></svg>
<div class="t" style="left:770.80px;top:283px;font-size:11px;line-height:14px;color:#000;letter-spacing:0.134px;">Нет</div>
<div class="t" style="left:757.60px;top:307px;font-size:11px;line-height:14px;color:#000;letter-spacing:-0.133px;">Префикс:</div>
<div style="left:743px;top:323px;width:77px;height:19.3px;background:#fff;border:1px solid #7a7a7a;"></div>
<div class="t" style="left:756.30px;top:343px;font-size:11px;line-height:14px;color:#000;letter-spacing:-0.265px;">Суффикс:</div>
<div style="left:743px;top:359.3px;width:77px;height:19.3px;background:#fff;border:1px solid #7a7a7a;"></div>
<div style="left:614.3px;top:385.3px;width:74.6px;height:21px;background:#e1e1e1;border:2px solid #0078d7;"></div>
<div style="left:617.3px;top:388.3px;width:68.6px;height:15px;border:1px dotted #111;"></div>
<div class="t" style="left:644.50px;top:389px;font-size:11px;line-height:14px;color:#000;letter-spacing:-1.394px;">OK</div>
<div style="left:693.4px;top:385.3px;width:74.2px;height:21px;background:#e1e1e1;border:1px solid #adadad;"></div>
<div class="t" style="left:710.40px;top:389px;font-size:11px;line-height:14px;color:#000;letter-spacing:-0.133px;">Отмена</div>
<div style="left:571px;top:491px;width:238px;height:259px;background:#f0f0f0;border:1px solid #6f6f6f;box-shadow:0 4px 16px rgba(0,0,0,.35),0 0 3px rgba(0,0,0,.25);"></div>
<div style="left:572px;top:492px;width:236px;height:29px;background:#fff;"></div>
<div class="t" style="left:601.20px;top:498px;font-size:12px;line-height:16px;color:#000;letter-spacing:0.064px;">Параметры подписи отметок</div>
<svg style="left:788px;top:500.7px;" width="10" height="10" viewBox="0 0 10 10"><path d="M0 0 L10 10 M10 0 L0 10" stroke="#111" stroke-width="1.1" fill="none"/></svg>
<div class="t" style="left:581.30px;top:495px;font-size:8.5px;line-height:12px;color:#000;letter-spacing:-0.847px;">12,3</div>
<svg style="left:578.6px;top:505.5px;" width="10" height="10" viewBox="0 0 10 10"><path d="M5 1.8 L8.2 5 L5 8.2 L1.8 5 Z" fill="#fff" stroke="#000" stroke-width="1.1"/></svg>
<div style="left:576.5px;top:532.3px;width:226px;height:71.6px;border:1px solid #dcdcdc;"></div>
<div style="left:583.7px;top:531.3px;width:159.8px;height:3px;background:#f0f0f0;"></div>
<div class="t" style="left:585.70px;top:525px;font-size:11px;line-height:14px;color:#000;letter-spacing:0.048px;">Выравнивание текста отметки</div>
<svg style="left:581.9px;top:544.1px;" width="13" height="13" viewBox="0 0 13 13"><circle cx="6.5" cy="6.5" r="5.9" fill="#fdfdfd" stroke="#333c4d" stroke-width="1"/><path d="M2.6 9.4 A5 5 0 0 0 10.6 9.6" stroke="#d8d8d8" stroke-width="1.6" fill="none"/><circle cx="6.5" cy="6.5" r="2.6" fill="#2fa32f"/><circle cx="6" cy="6" r="1.1" fill="#7ce07c"/></svg>
<div class="t" style="left:599.70px;top:544px;font-size:11px;line-height:14px;color:#000;letter-spacing:-0.063px;">справа вверху</div>
<svg style="left:581.9px;top:564.0px;" width="13" height="13" viewBox="0 0 13 13"><circle cx="6.5" cy="6.5" r="5.9" fill="#fdfdfd" stroke="#333c4d" stroke-width="1"/><path d="M2.6 9.4 A5 5 0 0 0 10.6 9.6" stroke="#d8d8d8" stroke-width="1.6" fill="none"/></svg>
<div class="t" style="left:599.70px;top:564px;font-size:11px;line-height:14px;color:#000;letter-spacing:-0.074px;">справа по центру</div>
<svg style="left:581.9px;top:583.9px;" width="13" height="13" viewBox="0 0 13 13"><circle cx="6.5" cy="6.5" r="5.9" fill="#fdfdfd" stroke="#333c4d" stroke-width="1"/><path d="M2.6 9.4 A5 5 0 0 0 10.6 9.6" stroke="#d8d8d8" stroke-width="1.6" fill="none"/></svg>
<div class="t" style="left:599.70px;top:584px;font-size:11px;line-height:14px;color:#000;letter-spacing:0.066px;">справа внизу</div>
<div style="left:581.3px;top:609.2px;width:44px;height:19.5px;background:#fff;border:1px solid #7a7a7a;"></div>
<div class="t" style="left:583.30px;top:611px;font-size:11px;line-height:14px;color:#000;letter-spacing:-0.028px;">0.8000</div>
<div class="t" style="left:629.00px;top:612px;font-size:11px;line-height:14px;color:#000;letter-spacing:0.135px;">Высота текста отметки</div>
<svg style="left:581.1px;top:638.0px;" width="13" height="13" viewBox="0 0 13 13"><rect x="0.5" y="0.5" width="12" height="12" fill="#fff" stroke="#333" stroke-width="1"/><path d="M2.8 6.6 L5.3 9.2 L10.3 3.4" stroke="#222" stroke-width="1.2" fill="none"/></svg>
<div class="t" style="left:597.40px;top:637px;font-size:11px;line-height:14px;color:#000;letter-spacing:0.049px;">Присвоить маркерам высоты 3D точек</div>
<svg style="left:581.1px;top:665.4px;" width="13" height="13" viewBox="0 0 13 13"><rect x="0.5" y="0.5" width="12" height="12" fill="#fff" stroke="#333" stroke-width="1"/><path d="M2.8 6.6 L5.3 9.2 L10.3 3.4" stroke="#222" stroke-width="1.2" fill="none"/></svg>
<div class="t" style="left:597.40px;top:665px;font-size:11px;line-height:14px;color:#000;letter-spacing:0.056px;">Присвоить текстам высоты 3D точек</div>
<svg style="left:581.1px;top:692.8px;" width="13" height="13" viewBox="0 0 13 13"><rect x="0.5" y="0.5" width="12" height="12" fill="#fff" stroke="#333" stroke-width="1"/></svg>
<div class="t" style="left:596.80px;top:692px;font-size:11px;line-height:14px;color:#000;letter-spacing:0.082px;">Скрывать запрос в текущей сесии</div>
<div style="left:640px;top:719px;width:94px;height:21.5px;background:#e1e1e1;border:2px solid #0078d7;"></div>
<div style="left:643px;top:722px;width:88px;height:15.5px;border:1px dotted #111;"></div>
<div class="t" style="left:658.50px;top:723px;font-size:11px;line-height:14px;color:#000;letter-spacing:-0.167px;">Применить</div>
<svg style="left:330px;top:800px;" width="80" height="85" viewBox="0 0 80 85"><path d="M8.5 73.5 H58.9" stroke="#000" stroke-width="1"/><path d="M8.5 73.5 V23" stroke="#000" stroke-width="1" stroke-dasharray="2.2 1.6"/><rect x="4.5" y="68.5" width="9" height="9" fill="none" stroke="#000" stroke-width="1"/></svg>
<div class="t" style="left:340.93px;top:803px;font-size:17px;line-height:21px;color:#000;">Y</div>
<div class="t" style="left:393.63px;top:856px;font-size:17px;line-height:21px;color:#000;">X</div>
</body></html>
